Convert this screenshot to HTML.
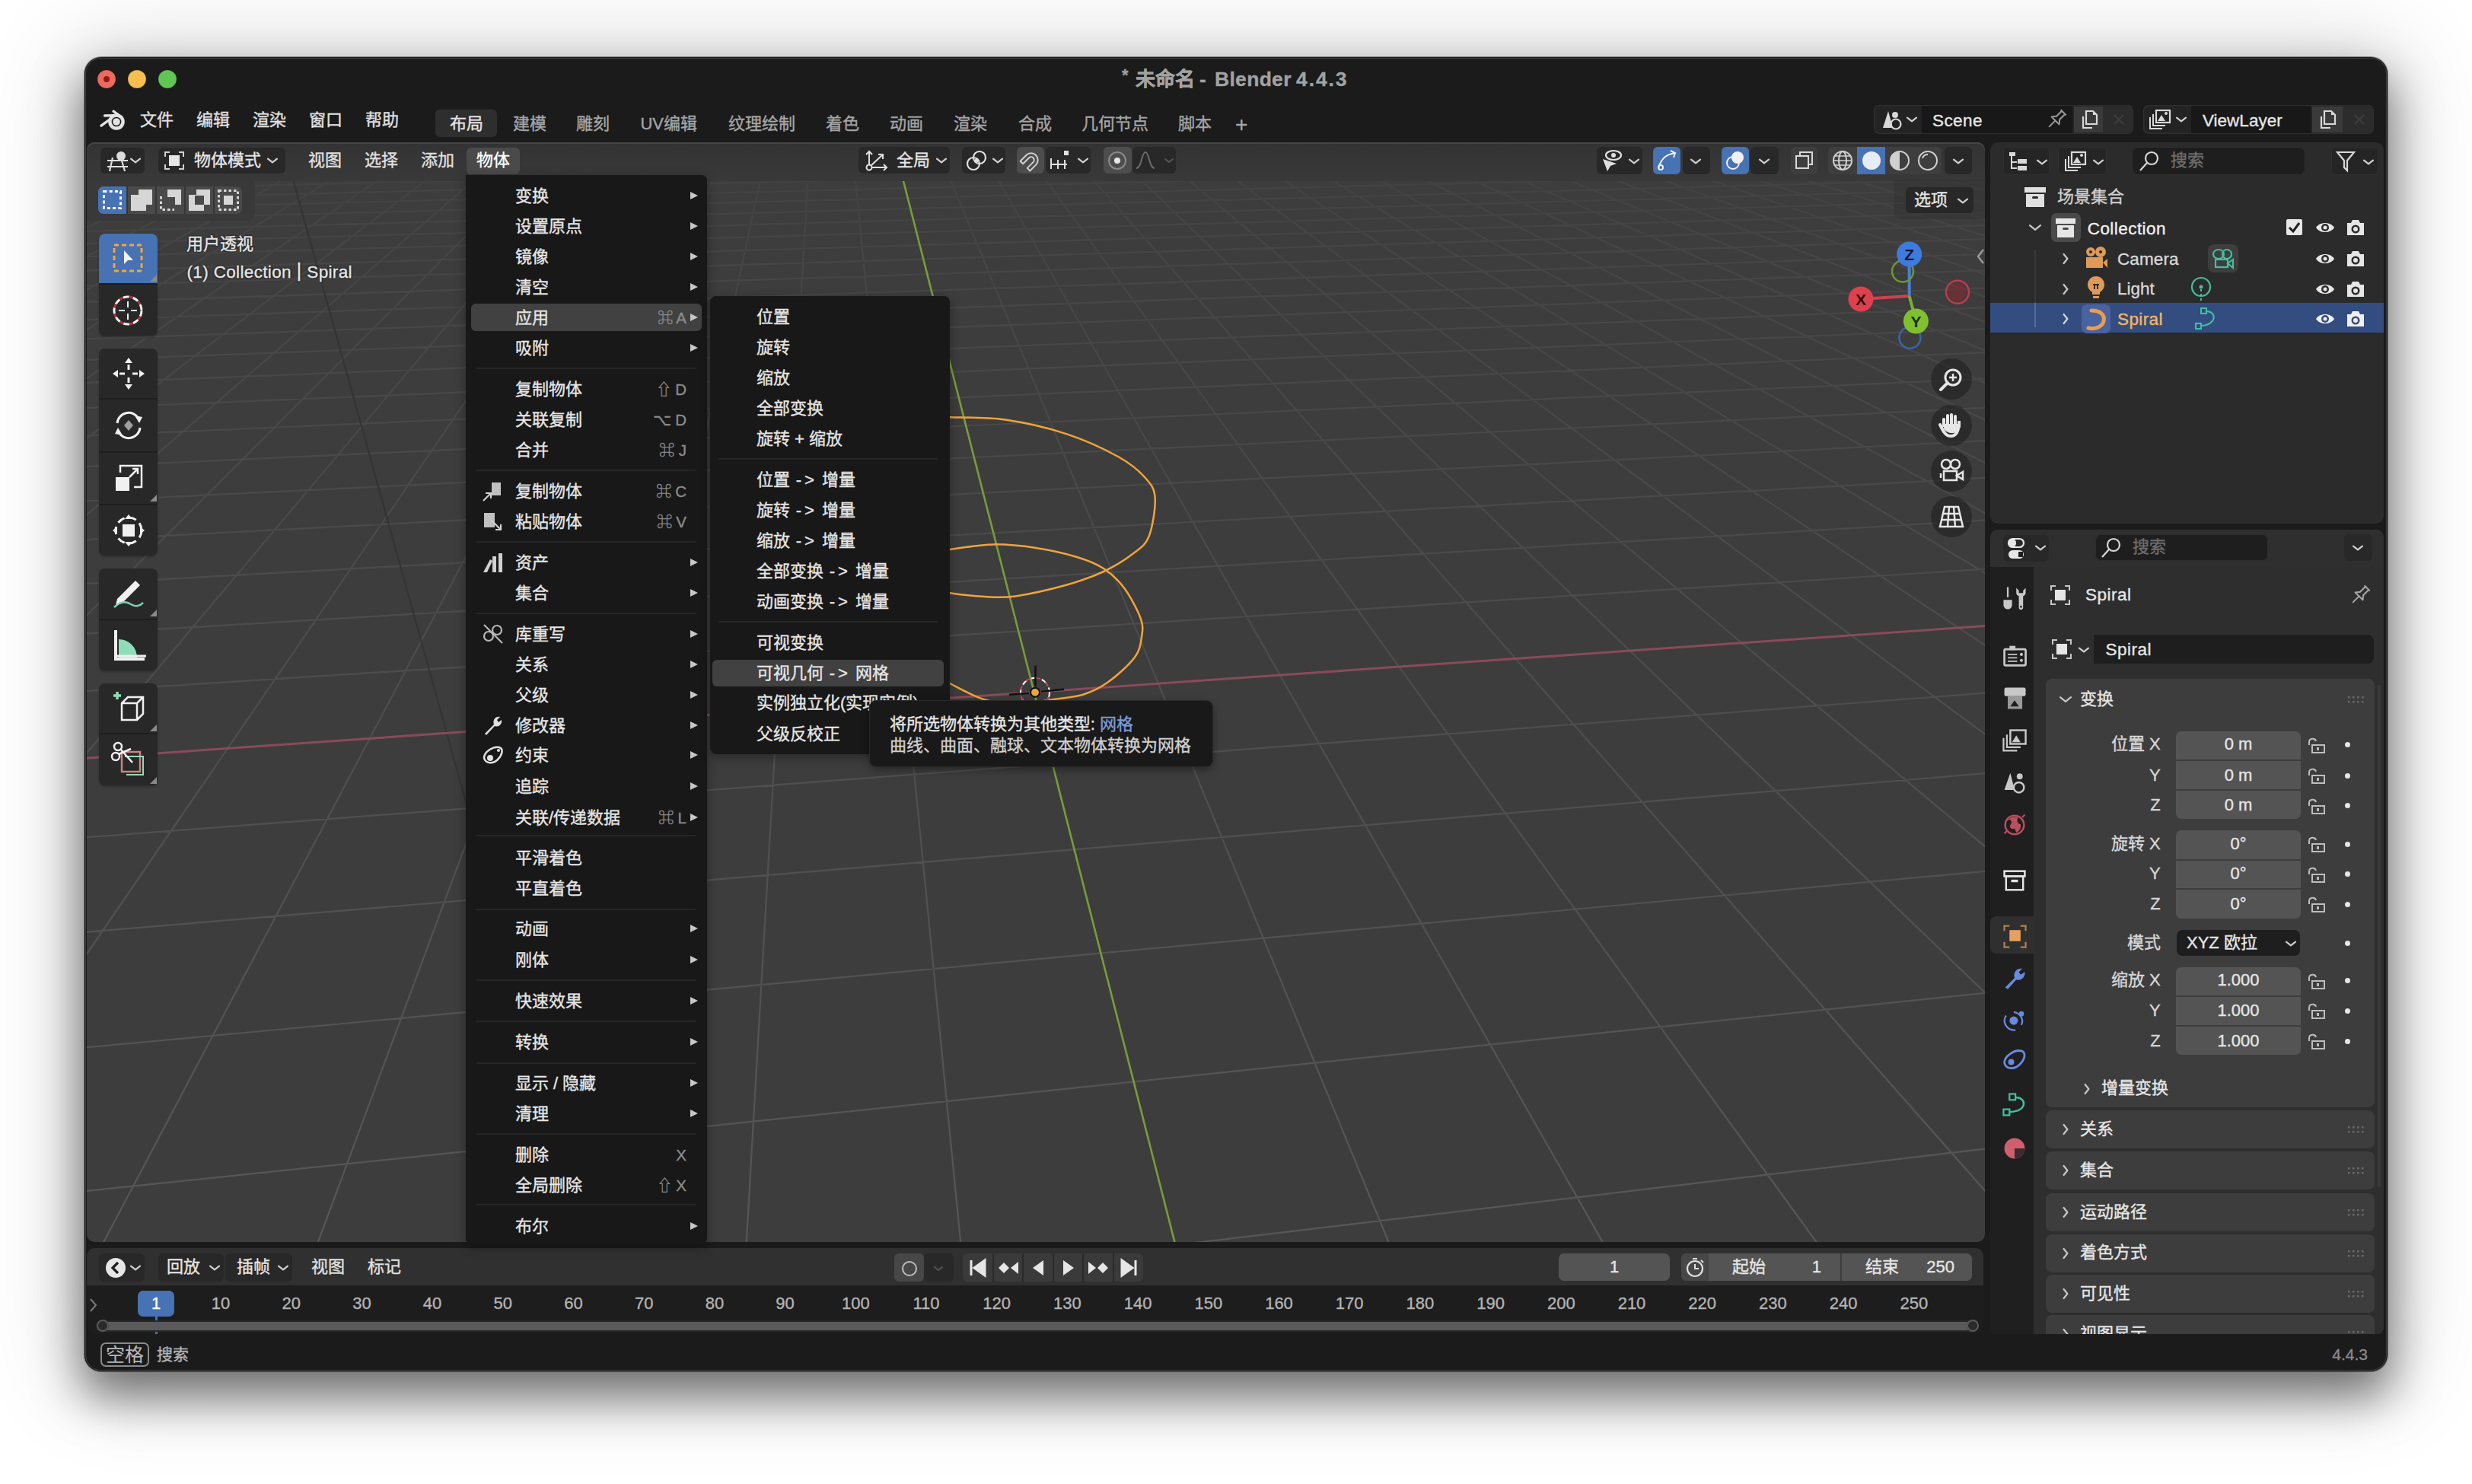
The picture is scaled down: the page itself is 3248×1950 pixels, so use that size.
<!DOCTYPE html><html lang="zh-CN"><head><meta charset="utf-8"><title>Blender</title><style>
html,body{margin:0;padding:0;}
body{width:3248px;height:1950px;overflow:hidden;background:#ffffff;position:relative;font-family:"Liberation Sans", sans-serif;}
.t{position:absolute;white-space:nowrap;-webkit-text-stroke:0.35px currentColor;}
.b{position:absolute;}
.s{position:absolute;overflow:visible;}
</style></head><body>
<div class="b" style="left:111px;top:75px;width:3025.5px;height:1727px;border-radius:22px;background:#1b1b1b;box-shadow:0 0 0 1px rgba(0,0,0,0.35), 0 30px 60px 4px rgba(0,0,0,0.50), 0 6px 120px 16px rgba(0,0,0,0.17);"></div>
<div class="b" style="left:112px;top:76px;width:3023.5px;height:1725px;border-radius:21px;box-shadow:inset 0 0 0 1px rgba(255,255,255,0.16);z-index:50;pointer-events:none"></div>
<div class="b" style="left:128px;top:92px;width:24px;height:24px;border-radius:12px;background:#ec6a5e;box-shadow:inset 0 0 0 0.5px rgba(0,0,0,0.25)"></div>
<div class="b" style="left:136.3px;top:100.3px;width:7.4px;height:7.4px;border-radius:4px;background:#8f1a12"></div>
<div class="b" style="left:168px;top:92px;width:24px;height:24px;border-radius:12px;background:#f4bf4f;box-shadow:inset 0 0 0 0.5px rgba(0,0,0,0.25)"></div>
<div class="b" style="left:208px;top:92px;width:24px;height:24px;border-radius:12px;background:#61c554;box-shadow:inset 0 0 0 0.5px rgba(0,0,0,0.25)"></div>
<div class="t" style="left:1474.0px;top:83.6px;font-size:22px;line-height:30.8px;color:#a2a2a2;font-weight:bold;">*</div>
<div class="t" style="left:1491.5px;top:85.8px;font-size:26px;line-height:36.4px;color:#a2a2a2;font-weight:bold;">未命名</div>
<div class="t" style="left:1576.0px;top:86.3px;font-size:26px;line-height:36.4px;color:#a2a2a2;font-weight:bold;">-</div>
<div class="t" style="left:1596.0px;top:86.0px;font-size:26.5px;line-height:37.1px;color:#a2a2a2;font-weight:bold;letter-spacing:0.3px">Blender</div>
<div class="t" style="left:1703.0px;top:86.0px;font-size:26.5px;line-height:37.1px;color:#a2a2a2;font-weight:bold;letter-spacing:1.9px">4.4.3</div>
<svg class="s" style="left:126.0px;top:138.0px;" width="40" height="36" viewBox="0 0 40 36"><g stroke="#e2e2e2" stroke-linecap="round" stroke-width="3.3" fill="none"><path d="M23 8.2 L31 14"/><path d="M11.5 14 L25 13.6"/><path d="M7 27.2 L19.5 18"/></g><circle cx="27" cy="22" r="10.8" fill="#e2e2e2"/><circle cx="27" cy="22" r="5.6" fill="none" stroke="#151515" stroke-width="1.5"/></svg>
<div class="t" style="left:183.7px;top:142.6px;font-size:22px;line-height:30.8px;color:#e0e0e0;font-weight:normal;">文件</div>
<div class="t" style="left:258.0px;top:142.6px;font-size:22px;line-height:30.8px;color:#e0e0e0;font-weight:normal;">编辑</div>
<div class="t" style="left:332.0px;top:142.6px;font-size:22px;line-height:30.8px;color:#e0e0e0;font-weight:normal;">渲染</div>
<div class="t" style="left:406.0px;top:142.6px;font-size:22px;line-height:30.8px;color:#e0e0e0;font-weight:normal;">窗口</div>
<div class="t" style="left:480.0px;top:142.6px;font-size:22px;line-height:30.8px;color:#e0e0e0;font-weight:normal;">帮助</div>
<div class="b" style="left:571.5px;top:144.0px;width:81.5px;height:36.0px;background:#2e2e2e;border-radius:6px;box-shadow:inset 0 1px 0 rgba(255,255,255,0.04)"></div>
<div class="t" style="left:590.6px;top:148.1px;font-size:22px;line-height:30.8px;color:#e6e6e6;font-weight:normal;">布局</div>
<div class="t" style="left:673.5px;top:148.1px;font-size:22px;line-height:30.8px;color:#a6a6a6;font-weight:normal;">建模</div>
<div class="t" style="left:756.5px;top:148.1px;font-size:22px;line-height:30.8px;color:#a6a6a6;font-weight:normal;">雕刻</div>
<div class="t" style="left:841.4px;top:148.1px;font-size:22px;line-height:30.8px;color:#a6a6a6;font-weight:normal;">UV编辑</div>
<div class="t" style="left:956.7px;top:148.1px;font-size:22px;line-height:30.8px;color:#a6a6a6;font-weight:normal;">纹理绘制</div>
<div class="t" style="left:1085.0px;top:148.1px;font-size:22px;line-height:30.8px;color:#a6a6a6;font-weight:normal;">着色</div>
<div class="t" style="left:1169.0px;top:148.1px;font-size:22px;line-height:30.8px;color:#a6a6a6;font-weight:normal;">动画</div>
<div class="t" style="left:1253.0px;top:148.1px;font-size:22px;line-height:30.8px;color:#a6a6a6;font-weight:normal;">渲染</div>
<div class="t" style="left:1338.0px;top:148.1px;font-size:22px;line-height:30.8px;color:#a6a6a6;font-weight:normal;">合成</div>
<div class="t" style="left:1420.7px;top:148.1px;font-size:22px;line-height:30.8px;color:#a6a6a6;font-weight:normal;">几何节点</div>
<div class="t" style="left:1548.0px;top:148.1px;font-size:22px;line-height:30.8px;color:#a6a6a6;font-weight:normal;">脚本</div>
<div class="t" style="left:1623.0px;top:143.9px;font-size:28px;line-height:39.2px;color:#a6a6a6;font-weight:normal;">+</div>
<div class="b" style="left:2462.0px;top:138.0px;width:341.0px;height:38.0px;background:#232323;border-radius:7px;box-shadow:inset 0 0 0 1.5px #2f2f2f"></div>
<div class="b" style="left:2525.0px;top:139.0px;width:198.0px;height:36.0px;background:#181818;border-radius:0px;"></div>
<div class="b" style="left:2725.0px;top:140.0px;width:38.0px;height:34.0px;background:#3a3a3a;border-radius:0px;"></div>
<div class="b" style="left:2763.0px;top:140.0px;width:38.5px;height:34.0px;background:#2c2c2c;border-radius:0px;border-radius:0 6px 6px 0"></div>
<div class="t" style="left:2539.0px;top:143.2px;font-size:22.5px;line-height:31.5px;color:#e6e6e6;font-weight:normal;letter-spacing:0.4px">Scene</div>
<svg class="s" style="left:2504.0px;top:151.0px;" width="16" height="12" viewBox="0 0 16 12"><path d="M2 3.6 L8 8.4 L14 3.6" fill="none" stroke="#d0d0d0" stroke-width="2.2" stroke-linecap="round" stroke-linejoin="round"/></svg>
<svg class="s" style="left:2470.0px;top:142.0px;" width="34" height="30" viewBox="0 0 34 30"><path d="M4 26 L11 4 L17 26 Z" fill="#d8d8d8"/><circle cx="20" cy="9" r="4" fill="#d8d8d8"/><circle cx="21" cy="21" r="6.5" fill="none" stroke="#d8d8d8" stroke-width="2.2"/></svg>
<svg class="s" style="left:2686.0px;top:141.0px;" width="32" height="32" viewBox="0 0 32 32"><g transform="rotate(45 16 16)"><path d="M11 3 H21 M13 3 V13 L9 18 H23 L19 13 V3 M16 18 V30" fill="none" stroke="#9a9a9a" stroke-width="2" stroke-linejoin="round"/></g></svg>
<svg class="s" style="left:2731.0px;top:143.0px;" width="28" height="28" viewBox="0 0 28 28"><path d="M6 10 V25 H18" fill="none" stroke="#d8d8d8" stroke-width="2.2"/><path d="M10 3 H19 L24 8 V20 H10 Z" fill="#3a3a3a" stroke="#d8d8d8" stroke-width="2.2"/><path d="M19 3 V8 H24 Z" fill="#d8d8d8"/></svg>
<svg class="s" style="left:2771.0px;top:144.0px;" width="26" height="26" viewBox="0 0 26 26"><path d="M7 7 L19 19 M19 7 L7 19" stroke="#3e3e3e" stroke-width="2.2"/></svg>
<div class="b" style="left:2816.0px;top:138.0px;width:303.0px;height:38.0px;background:#232323;border-radius:7px;box-shadow:inset 0 0 0 1.5px #2f2f2f"></div>
<div class="b" style="left:2879.0px;top:139.0px;width:157.0px;height:36.0px;background:#181818;border-radius:0px;"></div>
<div class="b" style="left:3038.0px;top:140.0px;width:40.0px;height:34.0px;background:#3a3a3a;border-radius:0px;"></div>
<div class="b" style="left:3078.0px;top:140.0px;width:39.5px;height:34.0px;background:#2c2c2c;border-radius:0px;border-radius:0 6px 6px 0"></div>
<div class="t" style="left:2894.0px;top:143.2px;font-size:22.5px;line-height:31.5px;color:#e6e6e6;font-weight:normal;">ViewLayer</div>
<svg class="s" style="left:2858.0px;top:151.0px;" width="16" height="12" viewBox="0 0 16 12"><path d="M2 3.6 L8 8.4 L14 3.6" fill="none" stroke="#d0d0d0" stroke-width="2.2" stroke-linecap="round" stroke-linejoin="round"/></svg>
<svg class="s" style="left:2823.0px;top:142.0px;" width="32" height="30" viewBox="0 0 32 30"><rect x="10" y="3" width="18" height="16" fill="none" stroke="#d8d8d8" stroke-width="2.2"/><path d="M12 17 L17 9 L22 17 Z" fill="#d8d8d8"/><circle cx="23" cy="7" r="2" fill="#d8d8d8"/><path d="M6 8 V23 H22 M2 12 V27 H18" fill="none" stroke="#d8d8d8" stroke-width="2"/></svg>
<svg class="s" style="left:3044.0px;top:143.0px;" width="28" height="28" viewBox="0 0 28 28"><path d="M6 10 V25 H18" fill="none" stroke="#d8d8d8" stroke-width="2.2"/><path d="M10 3 H19 L24 8 V20 H10 Z" fill="#3a3a3a" stroke="#d8d8d8" stroke-width="2.2"/><path d="M19 3 V8 H24 Z" fill="#d8d8d8"/></svg>
<svg class="s" style="left:3087.0px;top:144.0px;" width="26" height="26" viewBox="0 0 26 26"><path d="M7 7 L19 19 M19 7 L7 19" stroke="#3e3e3e" stroke-width="2.2"/></svg>
<svg class="s" style="left:114.0px;top:187.0px;" width="2494" height="1445" viewBox="0 0 2494 1445"><defs><clipPath id="vpc"><rect x="0" y="0" width="2494" height="1445" rx="10"/></clipPath></defs><g clip-path="url(#vpc)"><rect x="0" y="0" width="2494" height="1445" fill="#3d3d3d"/><linearGradient id="gg" gradientUnits="userSpaceOnUse" x1="0" y1="0" x2="0" y2="1445"><stop offset="0" stop-color="#414141"/><stop offset="0.1" stop-color="#454545"/><stop offset="0.45" stop-color="#4c4c4c"/><stop offset="1" stop-color="#575757"/></linearGradient><path d="M1653.1 -211.4L28167.0 5161.5M1632.4 -211.3L28859.2 5485.4M1611.7 -211.1L29638.1 5849.9M1590.9 -210.9L30521.0 6263.0M1570.1 -210.8L31530.4 6735.3M1549.2 -210.6L32695.4 7280.4M1528.3 -210.4L34055.1 7916.6M1507.3 -210.2L35662.7 8668.8M1486.2 -210.1L37592.7 9571.9M1465.1 -209.9L39953.2 10676.4M1443.9 -209.7L38942.4 10885.3M1422.7 -209.5L37187.0 10883.6M1401.4 -209.3L35431.6 10881.9M1380.0 -209.2L33676.2 10880.2M1358.6 -209.0L31920.7 10878.5M1337.1 -208.8L30165.3 10876.8M1315.5 -208.6L28409.9 10875.1M1293.9 -208.5L26654.5 10873.4M1272.2 -208.3L24899.1 10871.7M1250.5 -208.1L23143.6 10870.0M1228.7 -207.9L21388.2 10868.2M1206.9 -207.7L19632.8 10866.5M1184.9 -207.5L17877.4 10864.8M1163.0 -207.4L16122.0 10863.1M1140.9 -207.2L14366.5 10861.4M1118.8 -207.0L12611.1 10859.7M1096.6 -206.8L10855.7 10858.0M1074.4 -206.6L9100.3 10856.3M1052.1 -206.4L7344.9 10854.6M1029.7 -206.2L5589.4 10852.9M984.8 -205.9L2078.6 10849.5M962.2 -205.7L323.2 10847.7M939.6 -205.5L-1432.2 10846.0M916.9 -205.3L-3187.7 10844.3M894.1 -205.1L-4943.1 10842.6M871.3 -204.9L-6698.5 10840.9M848.4 -204.7L-8453.9 10839.2M825.4 -204.5L-10209.3 10837.5M802.4 -204.3L-11964.8 10835.8M779.3 -204.2L-13720.2 10834.1M756.1 -204.0L-15475.6 10832.4M732.8 -203.8L-17231.0 10830.7M709.5 -203.6L-18986.4 10829.0M686.2 -203.4L-20741.9 10827.3M662.7 -203.2L-22497.3 10825.5M639.2 -203.0L-24252.7 10823.8M615.6 -202.8L-26008.1 10822.1M591.9 -202.6L-27763.5 10820.4M568.2 -202.4L-29519.0 10818.7M544.4 -202.2L-31274.4 10817.0M520.5 -202.0L-33029.8 10815.3M496.6 -201.8L-34785.2 10813.6M472.6 -201.6L-36540.7 10811.9M448.5 -201.4L-38296.1 10810.2M424.3 -201.2L-40051.5 10808.5M400.1 -201.0L-41806.9 10806.8M375.8 -200.8L-43562.3 10805.0M351.4 -200.6L-45317.8 10803.3M326.9 -200.4L-47073.2 10801.6M302.4 -200.2L-48828.6 10799.9M2246.9 -216.4L-470.1 -193.7M2259.8 -215.1L-487.3 -191.9M2272.9 -213.7L-505.1 -189.9M2286.2 -212.3L-523.2 -188.0M2299.9 -210.9L-541.8 -186.0M2313.8 -209.4L-560.9 -183.9M2328.0 -207.9L-580.4 -181.8M2342.5 -206.4L-600.5 -179.6M2357.4 -204.9L-621.1 -177.4M2372.5 -203.3L-642.2 -175.1M2388.0 -201.7L-663.9 -172.7M2403.9 -200.0L-686.2 -170.3M2420.1 -198.3L-709.2 -167.8M2436.7 -196.6L-732.7 -165.3M2453.6 -194.8L-756.9 -162.7M2471.0 -193.0L-781.9 -160.0M2488.7 -191.1L-807.5 -157.2M2506.9 -189.2L-833.9 -154.3M2525.6 -187.3L-861.2 -151.4M2544.7 -185.3L-889.2 -148.3M2564.2 -183.3L-918.1 -145.2M2584.3 -181.2L-948.0 -142.0M2604.9 -179.0L-978.8 -138.6M2625.9 -176.8L-1010.6 -135.2M2647.6 -174.5L-1043.4 -131.6M2669.8 -172.2L-1077.4 -127.9M2692.6 -169.8L-1112.5 -124.1M2716.1 -167.4L-1148.9 -120.2M2740.2 -164.9L-1186.5 -116.1M2764.9 -162.3L-1225.5 -111.9M2790.4 -159.6L-1266.0 -107.5M2816.6 -156.9L-1307.9 -103.0M2843.6 -154.1L-1351.5 -98.3M2871.3 -151.2L-1396.7 -93.3M2899.9 -148.2L-1443.8 -88.3M2929.4 -145.1L-1492.8 -82.9M2959.8 -141.9L-1543.8 -77.4M2991.2 -138.7L-1596.9 -71.7M3023.5 -135.3L-1652.4 -65.7M3056.9 -131.8L-1710.3 -59.4M3091.4 -128.2L-1770.8 -52.8M3127.1 -124.5L-1834.1 -46.0M3164.0 -120.6L-1900.4 -38.8M3202.2 -116.6L-1969.9 -31.3M3241.7 -112.5L-2042.9 -23.4M3282.6 -108.2L-2119.6 -15.1M3325.1 -103.8L-2200.2 -6.3M3369.1 -99.2L-2285.3 2.9M3414.9 -94.4L-2374.9 12.6M3462.4 -89.4L-2469.7 22.9M3511.7 -84.3L-2570.0 33.7M3563.1 -78.9L-2676.3 45.3M3616.6 -73.3L-2789.2 57.5M3672.4 -67.5L-2909.4 70.5M3730.5 -61.4L-3037.4 84.4M3791.2 -55.1L-3174.2 99.2M3854.7 -48.4L-3320.7 115.0M3921.0 -41.5L-3477.8 132.1M3990.5 -34.2L-3647.0 150.4M4063.4 -26.6L-3829.5 170.2M4139.8 -18.6L-4027.0 191.6M4220.1 -10.3L-4241.5 214.8M4304.6 -1.4L-4475.2 240.1M4393.6 7.9L-4730.9 267.8M4487.5 17.7L-5011.8 298.2M4586.7 28.0L-5321.7 331.8M4691.6 39.0L-5665.6 369.0M4802.9 50.6L-6049.1 410.6M4920.9 63.0L-6479.8 457.2M5046.5 76.1L-6966.7 510.0M5180.3 90.1L-7521.8 570.1M5323.2 105.0L-8160.3 639.3M5476.1 121.0L-8902.6 719.7M5640.2 138.1L-9776.4 814.3M5816.7 156.6L-10819.7 927.3M6007.1 176.4L-12087.5 1064.6M6213.0 198.0L-13660.7 1235.1M6436.4 221.3L-15665.0 1452.2M6679.8 246.7L-18305.5 1738.2M6945.8 274.5L-21942.3 2132.1M7560.0 338.7L-35828.4 3636.2M7916.9 376.0L-51827.1 5369.2M8314.8 417.6L-92436.9 9767.9M8761.0 464.2L-89953.2 10759.9M9264.9 516.8L-76917.6 10772.6M9838.5 576.7L-63882.1 10785.3M10497.4 645.6L-50846.5 10798.0M11262.0 725.5L-37810.9 10810.6M12160.0 819.3L-24775.3 10823.3M13229.8 931.1L-11739.7 10836.0M14525.7 1066.5L1295.9 10848.7M16128.0 1233.9L14331.5 10861.4M18159.9 1446.2L27367.1 10874.1M20820.9 1724.2L40402.7 10886.7" stroke="url(#gg)" stroke-width="2.2" fill="none"/><path d="M500.6 875.8L120.2 -494.2" stroke="#343434" stroke-width="2.2" fill="none"/><path d="M8306.1 230.6L-100503.0 7811.4" stroke="#8a4a5a" stroke-width="3" fill="none"/><path d="M1007.3 -206.1L3834.0 10851.2" stroke="#7a9c3a" stroke-width="2.6" fill="none"/><path d="M1086.0 361.0C1094.0 361.1 1113.8 360.7 1134.0 361.3C1154.2 361.9 1181.3 360.9 1206.9 364.6C1232.5 368.3 1263.0 375.3 1287.7 383.4C1312.4 391.5 1338.0 403.6 1355.0 413.0C1372.0 422.4 1381.9 431.0 1390.0 440.0C1398.1 449.0 1402.7 454.0 1403.6 467.0C1404.5 480.0 1400.4 505.7 1395.5 518.0C1390.6 530.3 1383.9 533.3 1374.0 541.0C1364.1 548.7 1350.4 557.2 1336.0 564.0C1321.6 570.8 1307.0 576.1 1287.7 581.5C1268.4 586.9 1238.0 593.8 1220.0 596.4C1202.0 599.0 1194.3 597.7 1180.0 597.0C1165.7 596.3 1149.7 594.6 1134.0 592.3C1118.3 590.0 1094.0 584.5 1086.0 583.0" stroke="#f0a43c" stroke-width="2.5" fill="none"/><path d="M1086.0 541.0C1094.0 540.0 1116.5 537.1 1134.0 535.0C1151.5 532.9 1171.9 528.7 1190.7 528.4C1209.5 528.1 1228.6 530.2 1247.0 533.0C1265.4 535.8 1286.2 540.5 1301.0 545.0C1315.8 549.5 1325.7 553.2 1336.0 560.0C1346.3 566.8 1354.9 574.6 1363.0 585.6C1371.1 596.6 1381.0 615.3 1384.8 626.0C1388.6 636.7 1387.3 641.5 1386.0 650.0C1384.7 658.5 1384.1 667.1 1376.7 677.0C1369.3 686.9 1352.9 701.5 1341.6 709.6C1330.3 717.7 1321.6 721.9 1309.0 725.7C1296.4 729.5 1280.3 730.3 1266.0 732.5C1251.7 734.7 1237.3 739.0 1223.0 739.0C1208.7 739.0 1194.8 737.2 1180.0 732.5C1165.2 727.8 1149.7 719.2 1134.0 711.0C1118.3 702.8 1094.0 687.7 1086.0 683.0" stroke="#f0a43c" stroke-width="2.5" fill="none"/><circle cx="1246" cy="722.8" r="19" fill="none" stroke="#ffffff" stroke-width="2" stroke-dasharray="8 6"/><circle cx="1246" cy="722.8" r="19" fill="none" stroke="#d04050" stroke-width="2" stroke-dasharray="6 8" stroke-dashoffset="8"/><path d="M1212 725.8L1238 723.8M1254 721.8L1284 718.8M1246.5 687.8L1246.5 714.8" stroke="#111" stroke-width="2.6"/><circle cx="1246" cy="722.8" r="6" fill="#f0a43c" stroke="#111" stroke-width="2.2"/></g></svg>
<div class="b" style="left:114px;top:187px;width:2494px;height:51px;border-radius:10px 10px 0 0;background:linear-gradient(#333333,#393939);box-shadow:inset 0 2px 0 rgba(255,255,255,0.09)"></div>
<div class="b" style="left:114px;top:238px;width:221px;height:52px;border-radius:0 0 10px 0;background:#393939"></div>
<div class="b" style="left:131.5px;top:193.5px;width:58.5px;height:34.5px;background:#282828;border-radius:6px;"></div>
<svg class="s" style="left:138.0px;top:196.0px;" width="36" height="30" viewBox="0 0 36 30"><circle cx="21" cy="9" r="6" fill="#dcdcdc"/><path d="M3 15 H30 M3 23 H30 M10 11 L6 29 M22 15 L26 29" stroke="#dcdcdc" stroke-width="2.2"/></svg>
<svg class="s" style="left:170.0px;top:205.0px;" width="16" height="12" viewBox="0 0 16 12"><path d="M2 3.6 L8 8.4 L14 3.6" fill="none" stroke="#d0d0d0" stroke-width="2.2" stroke-linecap="round" stroke-linejoin="round"/></svg>
<div class="b" style="left:208.0px;top:193.5px;width:167.0px;height:34.5px;background:#282828;border-radius:6px;"></div>
<svg class="s" style="left:214.0px;top:197.0px;" width="30" height="28" viewBox="0 0 30 28"><rect x="8" y="7" width="14" height="14" fill="#e6e6e6"/><path d="M3 9 V3 H9 M21 3 H27 V9 M27 19 V25 H21 M9 25 H3 V19" fill="none" stroke="#d0d0d0" stroke-width="2"/></svg>
<div class="t" style="left:255.0px;top:195.6px;font-size:22px;line-height:30.8px;color:#e6e6e6;font-weight:normal;">物体模式</div>
<svg class="s" style="left:350.0px;top:205.0px;" width="16" height="12" viewBox="0 0 16 12"><path d="M2 3.6 L8 8.4 L14 3.6" fill="none" stroke="#d0d0d0" stroke-width="2.2" stroke-linecap="round" stroke-linejoin="round"/></svg>
<div class="t" style="left:404.6px;top:195.6px;font-size:22px;line-height:30.8px;color:#e0e0e0;font-weight:normal;">视图</div>
<div class="t" style="left:478.6px;top:195.6px;font-size:22px;line-height:30.8px;color:#e0e0e0;font-weight:normal;">选择</div>
<div class="t" style="left:552.7px;top:195.6px;font-size:22px;line-height:30.8px;color:#e0e0e0;font-weight:normal;">添加</div>
<div class="b" style="left:613.0px;top:193.5px;width:70.0px;height:35.5px;background:#4a4a4a;border-radius:6px;"></div>
<div class="t" style="left:625.5px;top:195.6px;font-size:22px;line-height:30.8px;color:#ffffff;font-weight:normal;">物体</div>
<div class="b" style="left:1128.0px;top:193.0px;width:120.0px;height:34.5px;background:#282828;border-radius:6px;"></div>
<svg class="s" style="left:1136.0px;top:196.0px;" width="34" height="30" viewBox="0 0 34 30"><circle cx="6" cy="24" r="3.5" fill="none" stroke="#e0e0e0" stroke-width="2"/><path d="M6 20 V3 M2 7 L6 3 L10 7 M9 24 H29 M25 20 L29 24 L25 28 M9 21 L24 7 M18 7 H24 V13" fill="none" stroke="#e0e0e0" stroke-width="2"/></svg>
<div class="t" style="left:1178.0px;top:195.6px;font-size:22px;line-height:30.8px;color:#e6e6e6;font-weight:normal;">全局</div>
<svg class="s" style="left:1229.0px;top:205.0px;" width="16" height="12" viewBox="0 0 16 12"><path d="M2 3.6 L8 8.4 L14 3.6" fill="none" stroke="#d0d0d0" stroke-width="2.2" stroke-linecap="round" stroke-linejoin="round"/></svg>
<div class="b" style="left:1264.0px;top:193.0px;width:56.5px;height:34.5px;background:#282828;border-radius:6px;"></div>
<svg class="s" style="left:1268.0px;top:196.0px;" width="30" height="30" viewBox="0 0 30 30"><circle cx="11" cy="19" r="8" fill="none" stroke="#e0e0e0" stroke-width="2.2"/><circle cx="19" cy="11" r="8" fill="none" stroke="#e0e0e0" stroke-width="2.2"/><circle cx="15" cy="15" r="2.5" fill="#e0e0e0"/></svg>
<svg class="s" style="left:1303.0px;top:205.0px;" width="16" height="12" viewBox="0 0 16 12"><path d="M2 3.6 L8 8.4 L14 3.6" fill="none" stroke="#d0d0d0" stroke-width="2.2" stroke-linecap="round" stroke-linejoin="round"/></svg>
<div class="b" style="left:1335.6px;top:193.0px;width:36.4px;height:34.5px;background:#4d4d4d;border-radius:6px;"></div>
<svg class="s" style="left:1338.0px;top:196.0px;" width="32" height="30" viewBox="0 0 32 30"><g transform="rotate(45 16 15)"><path d="M7 25 V14 A9 9 0 0 1 25 14 V25 H20 V14 A4 4 0 0 0 12 14 V25 Z" fill="none" stroke="#cfcfcf" stroke-width="2" stroke-linejoin="round"/></g></svg>
<div class="b" style="left:1374.0px;top:193.0px;width:59.0px;height:34.5px;background:#282828;border-radius:6px;"></div>
<svg class="s" style="left:1378.0px;top:196.0px;" width="36" height="30" viewBox="0 0 36 30"><path d="M3 12 V26 M12 14 V26 M21 14 V26 M3 20 H24" stroke="#e0e0e0" stroke-width="2"/><rect x="20" y="2" width="6" height="6" fill="#e0e0e0"/></svg>
<svg class="s" style="left:1415.0px;top:205.0px;" width="16" height="12" viewBox="0 0 16 12"><path d="M2 3.6 L8 8.4 L14 3.6" fill="none" stroke="#d0d0d0" stroke-width="2.2" stroke-linecap="round" stroke-linejoin="round"/></svg>
<div class="b" style="left:1450.0px;top:193.0px;width:37.0px;height:34.5px;background:#4d4d4d;border-radius:6px;"></div>
<svg class="s" style="left:1452.0px;top:196.0px;" width="32" height="30" viewBox="0 0 32 30"><circle cx="16" cy="15" r="11" fill="none" stroke="#8a8a8a" stroke-width="2"/><circle cx="16" cy="15" r="4" fill="#e6e6e6"/></svg>
<div class="b" style="left:1488.0px;top:193.0px;width:57.0px;height:34.5px;background:#282828;border-radius:6px;"></div>
<svg class="s" style="left:1490.0px;top:197.0px;" width="40" height="28" viewBox="0 0 40 28"><path d="M3 24 C10 24 10 3 15 3 C20 3 20 24 27 24" fill="none" stroke="#6a6a6a" stroke-width="2"/></svg>
<svg class="s" style="left:1529.0px;top:206.0px;" width="14" height="10" viewBox="0 0 14 10"><path d="M2 3.0 L7 7.0 L12 3.0" fill="none" stroke="#555" stroke-width="2.2" stroke-linecap="round" stroke-linejoin="round"/></svg>
<div class="b" style="left:2098.0px;top:193.0px;width:60.0px;height:36.0px;background:#282828;border-radius:6px;"></div>
<svg class="s" style="left:2102.0px;top:195.0px;" width="36" height="32" viewBox="0 0 36 32"><path d="M4 14 L22 20 L14 23 L10 30 Z" fill="#e0e0e0"/><ellipse cx="18" cy="9" rx="10" ry="6" fill="none" stroke="#e0e0e0" stroke-width="2.2"/><circle cx="18" cy="9" r="3" fill="#e0e0e0"/></svg>
<svg class="s" style="left:2139.0px;top:206.0px;" width="16" height="12" viewBox="0 0 16 12"><path d="M2 3.6 L8 8.4 L14 3.6" fill="none" stroke="#d0d0d0" stroke-width="2.2" stroke-linecap="round" stroke-linejoin="round"/></svg>
<div class="b" style="left:2172.0px;top:193.0px;width:36.0px;height:36.0px;background:#4772b3;border-radius:6px;"></div>
<svg class="s" style="left:2174.0px;top:195.0px;" width="32" height="32" viewBox="0 0 32 32"><path d="M5 26 C9 12 16 8 27 6 M21 3 L27 6 L25 12" fill="none" stroke="#f0f0f0" stroke-width="2"/><circle cx="8" cy="25" r="3" fill="none" stroke="#f0f0f0" stroke-width="2"/></svg>
<div class="b" style="left:2211.0px;top:193.0px;width:36.0px;height:36.0px;background:#282828;border-radius:6px;"></div>
<svg class="s" style="left:2220.0px;top:206.0px;" width="16" height="12" viewBox="0 0 16 12"><path d="M2 3.6 L8 8.4 L14 3.6" fill="none" stroke="#d0d0d0" stroke-width="2.2" stroke-linecap="round" stroke-linejoin="round"/></svg>
<div class="b" style="left:2262.0px;top:193.0px;width:36.0px;height:36.0px;background:#4772b3;border-radius:6px;"></div>
<svg class="s" style="left:2264.0px;top:195.0px;" width="32" height="32" viewBox="0 0 32 32"><circle cx="13" cy="19" r="8" fill="none" stroke="#f0f0f0" stroke-width="2"/><circle cx="19" cy="12" r="8" fill="#f0f0f0"/></svg>
<div class="b" style="left:2300.0px;top:193.0px;width:37.0px;height:36.0px;background:#282828;border-radius:6px;"></div>
<svg class="s" style="left:2310.0px;top:206.0px;" width="16" height="12" viewBox="0 0 16 12"><path d="M2 3.6 L8 8.4 L14 3.6" fill="none" stroke="#d0d0d0" stroke-width="2.2" stroke-linecap="round" stroke-linejoin="round"/></svg>
<div class="b" style="left:2353.0px;top:193.0px;width:35.0px;height:36.0px;background:#3e3e3e;border-radius:6px;"></div>
<svg class="s" style="left:2355.0px;top:195.0px;" width="32" height="32" viewBox="0 0 32 32"><rect x="5" y="10" width="16" height="16" fill="none" stroke="#d8d8d8" stroke-width="2"/><path d="M10 10 V5 H26 V21 H21" fill="none" stroke="#d8d8d8" stroke-width="2"/></svg>
<div class="b" style="left:2402.0px;top:193.0px;width:149.0px;height:36.0px;background:#3e3e3e;border-radius:6px;"></div>
<div class="b" style="left:2440.0px;top:193.0px;width:37.0px;height:36.0px;background:#4772b3;border-radius:0px;"></div>
<svg class="s" style="left:2404.0px;top:195.0px;" width="34" height="32" viewBox="0 0 34 32"><circle cx="17" cy="16" r="12" fill="none" stroke="#d0d0d0" stroke-width="2"/><ellipse cx="17" cy="16" rx="5" ry="12" fill="none" stroke="#d0d0d0" stroke-width="2"/><path d="M5 16 H29 M7 10 H27 M7 22 H27" stroke="#d0d0d0" stroke-width="1.6"/></svg>
<svg class="s" style="left:2442.0px;top:195.0px;" width="34" height="32" viewBox="0 0 34 32"><circle cx="17" cy="16" r="12" fill="#e8ecf4"/></svg>
<svg class="s" style="left:2479.0px;top:195.0px;" width="34" height="32" viewBox="0 0 34 32"><circle cx="17" cy="16" r="12" fill="none" stroke="#d0d0d0" stroke-width="2"/><path d="M17 4 A12 12 0 0 0 17 28 Z" fill="#d0d0d0"/></svg>
<svg class="s" style="left:2516.0px;top:195.0px;" width="34" height="32" viewBox="0 0 34 32"><circle cx="17" cy="16" r="12" fill="none" stroke="#d0d0d0" stroke-width="2"/><path d="M10 13 A7 7 0 0 1 17 8" fill="none" stroke="#d0d0d0" stroke-width="2"/></svg>
<div class="b" style="left:2555.0px;top:193.0px;width:36.0px;height:36.0px;background:#282828;border-radius:6px;"></div>
<svg class="s" style="left:2565.0px;top:206.0px;" width="16" height="12" viewBox="0 0 16 12"><path d="M2 3.6 L8 8.4 L14 3.6" fill="none" stroke="#d0d0d0" stroke-width="2.2" stroke-linecap="round" stroke-linejoin="round"/></svg>
<div class="b" style="left:2488px;top:236px;width:120px;height:52px;background:rgba(48,48,48,0.45);border-radius:0 0 0 10px"></div>
<div class="b" style="left:2504.0px;top:245.5px;width:89.0px;height:34.5px;background:#282828;border-radius:6px;"></div>
<div class="t" style="left:2515.0px;top:247.6px;font-size:22px;line-height:30.8px;color:#e6e6e6;font-weight:normal;">选项</div>
<svg class="s" style="left:2571.0px;top:258.0px;" width="16" height="12" viewBox="0 0 16 12"><path d="M2 3.6 L8 8.4 L14 3.6" fill="none" stroke="#d0d0d0" stroke-width="2.2" stroke-linecap="round" stroke-linejoin="round"/></svg>
<div class="b" style="left:129.0px;top:244.6px;width:189.0px;height:36.4px;background:#4a4a4a;border-radius:7px;"></div>
<div class="b" style="left:129.0px;top:244.6px;width:38.0px;height:36.4px;background:#4772b3;border-radius:0px;border-radius:7px 0 0 7px"></div>
<div class="b" style="left:166.0px;top:244.6px;width:2.0px;height:36.4px;background:#363636;border-radius:0px;"></div>
<div class="b" style="left:204.0px;top:244.6px;width:2.0px;height:36.4px;background:#363636;border-radius:0px;"></div>
<div class="b" style="left:242.0px;top:244.6px;width:2.0px;height:36.4px;background:#363636;border-radius:0px;"></div>
<div class="b" style="left:280.0px;top:244.6px;width:2.0px;height:36.4px;background:#363636;border-radius:0px;"></div>
<svg class="s" style="left:133.0px;top:248.0px;" width="30" height="30" viewBox="0 0 30 30"><rect x="3.5" y="3.5" width="22" height="22" fill="none" stroke="#ffffff" stroke-width="3" stroke-dasharray="4 3.2"/></svg>
<svg class="s" style="left:171.0px;top:248.0px;" width="30" height="30" viewBox="0 0 30 30"><path d="M1 8 H11 V1 H29 V21 H21 V29 H1 Z" fill="#d6d6d6"/></svg>
<svg class="s" style="left:209.0px;top:248.0px;" width="30" height="30" viewBox="0 0 30 30"><path d="M11 1 H29 V21 H21 V11 H11 Z" fill="#d6d6d6"/><path d="M2.5 10 V27.5 H20" fill="none" stroke="#d6d6d6" stroke-width="3" stroke-dasharray="3.5 3"/></svg>
<svg class="s" style="left:247.0px;top:248.0px;" width="30" height="30" viewBox="0 0 30 30"><path d="M1 8 H11 V1 H29 V21 H21 V29 H1 Z" fill="#d6d6d6"/><rect x="9" y="9" width="12" height="12" fill="#4a4a4a"/></svg>
<svg class="s" style="left:285.0px;top:248.0px;" width="30" height="30" viewBox="0 0 30 30"><rect x="2.5" y="2.5" width="25" height="25" fill="none" stroke="#d6d6d6" stroke-width="3" stroke-dasharray="3.5 3"/><rect x="9" y="9" width="12" height="12" fill="#d6d6d6"/></svg>
<div class="b" style="left:130.0px;top:307.0px;width:77.0px;height:134.0px;background:#282828;border-radius:8px;box-shadow:0 2px 3px rgba(0,0,0,0.25)"></div>
<div class="b" style="left:130.0px;top:458.0px;width:77.0px;height:272.0px;background:#282828;border-radius:8px;box-shadow:0 2px 3px rgba(0,0,0,0.25)"></div>
<div class="b" style="left:130.0px;top:747.0px;width:77.0px;height:134.0px;background:#282828;border-radius:8px;box-shadow:0 2px 3px rgba(0,0,0,0.25)"></div>
<div class="b" style="left:130.0px;top:898.0px;width:77.0px;height:133.5px;background:#282828;border-radius:8px;box-shadow:0 2px 3px rgba(0,0,0,0.25)"></div>
<div class="b" style="left:130.0px;top:307.0px;width:77.0px;height:65.0px;background:#4772b3;border-radius:8px;border-radius:8px 8px 0 0"></div>
<div class="b" style="left:130.0px;top:372.2px;width:77.0px;height:2.0px;background:#1f1f1f;border-radius:0px;"></div>
<div class="b" style="left:130.0px;top:523.2px;width:77.0px;height:2.0px;background:#1f1f1f;border-radius:0px;"></div>
<div class="b" style="left:130.0px;top:592.8px;width:77.0px;height:2.0px;background:#1f1f1f;border-radius:0px;"></div>
<div class="b" style="left:130.0px;top:662.0px;width:77.0px;height:2.0px;background:#1f1f1f;border-radius:0px;"></div>
<div class="b" style="left:130.0px;top:812.5px;width:77.0px;height:2.0px;background:#1f1f1f;border-radius:0px;"></div>
<div class="b" style="left:130.0px;top:963.0px;width:77.0px;height:2.0px;background:#1f1f1f;border-radius:0px;"></div>
<svg class="s" style="left:144.0px;top:316.0px;" width="50" height="48" viewBox="0 0 50 48"><rect x="6" y="6" width="36" height="34" fill="none" stroke="#f0a640" stroke-width="3" stroke-dasharray="6 4"/><path d="M19 13 L19 31 L24 26 L31 26 Z" fill="#f0f0f0"/></svg>
<svg class="s" style="left:144.0px;top:384.0px;" width="50" height="48" viewBox="0 0 50 48"><circle cx="24" cy="24" r="18" fill="none" stroke="#f0f0f0" stroke-width="3" stroke-dasharray="8 5"/><circle cx="24" cy="24" r="18" fill="none" stroke="#b03040" stroke-width="3" stroke-dasharray="5 8" stroke-dashoffset="-8"/><path d="M24 12 V20 M24 28 V36 M12 24 H20 M28 24 H36" stroke="#f0f0f0" stroke-width="2"/></svg>
<svg class="s" style="left:144.0px;top:466.0px;" width="50" height="50" viewBox="0 0 50 50"><path d="M25 4 L20 11 H30 Z M25 46 L20 39 H30 Z M4 25 L11 20 V30 Z M46 25 L39 20 V30 Z" fill="#f0f0f0"/><path d="M25 13 V20 M25 30 V37 M13 25 H20 M30 25 H37" stroke="#f0f0f0" stroke-width="3"/></svg>
<svg class="s" style="left:144.0px;top:534.0px;" width="50" height="50" viewBox="0 0 50 50"><path d="M10 22 A15 15 0 0 1 38 16 M40 28 A15 15 0 0 1 12 34" fill="none" stroke="#f0f0f0" stroke-width="3"/><path d="M33 12 L43 14 L39 22 Z M17 38 L7 36 L11 28 Z" fill="#f0f0f0"/><path d="M25 18 L31 25 L25 32 L19 25 Z" fill="#a0a0a0"/></svg>
<svg class="s" style="left:144.0px;top:603.0px;" width="50" height="50" viewBox="0 0 50 50"><rect x="8" y="24" width="18" height="18" fill="#f0f0f0"/><path d="M14 18 V9 H42 V37 H32 M26 24 L36 14 M30 13 H37 V20" fill="none" stroke="#f0f0f0" stroke-width="2.5"/></svg>
<svg class="s" style="left:144.0px;top:672.0px;" width="50" height="50" viewBox="0 0 50 50"><circle cx="25" cy="25" r="17" fill="none" stroke="#f0f0f0" stroke-width="3" stroke-dasharray="10 6"/><rect x="17" y="17" width="16" height="16" fill="#f0f0f0"/><path d="M25 4 L20 10 H30 Z M25 46 L20 40 H30 Z M4 25 L10 20 V30 Z M46 25 L40 20 V30 Z" fill="#f0f0f0"/></svg>
<svg class="s" style="left:144.0px;top:754.0px;" width="50" height="50" viewBox="0 0 50 50"><path d="M10 33 L34 9 L40 15 L16 39 L8 41 Z" fill="#f0f0f0"/><path d="M6 44 C14 36 22 36 28 40 C34 44 40 42 44 38" fill="none" stroke="#7fd0b0" stroke-width="2.5"/></svg>
<svg class="s" style="left:144.0px;top:822.0px;" width="50" height="52" viewBox="0 0 50 52"><path d="M8 6 V44 H46" fill="none" stroke="#f0f0f0" stroke-width="4"/><path d="M12 42 V18 A24 24 0 0 1 36 42 Z" fill="#8fdcb8"/><path d="M8 40 H48" stroke="#f0f0f0" stroke-width="3"/></svg>
<svg class="s" style="left:144.0px;top:904.0px;" width="50" height="52" viewBox="0 0 50 52"><path d="M5 10 H15 M10 5 V15" stroke="#8fdcb8" stroke-width="3.5"/><path d="M16 20 L24 12 H44 V34 L36 42 H16 Z M16 20 H36 V42 M36 20 L44 12" fill="none" stroke="#f0f0f0" stroke-width="2.5"/></svg>
<svg class="s" style="left:144.0px;top:972.0px;" width="50" height="52" viewBox="0 0 50 52"><rect x="16" y="16" width="24" height="26" fill="none" stroke="#d08080" stroke-width="2.5"/><path d="M20 22 H44 V46 H22" fill="none" stroke="#8fdcb8" stroke-width="2"/><circle cx="11" cy="9" r="5" fill="none" stroke="#f0f0f0" stroke-width="2.5"/><circle cx="8" cy="22" r="5" fill="none" stroke="#f0f0f0" stroke-width="2.5"/><path d="M14 12 L30 30 M12 19 L28 12" stroke="#f0f0f0" stroke-width="2.5"/></svg>
<svg class="s" style="left:197.0px;top:361.0px;" width="9" height="9" viewBox="0 0 9 9"><path d="M9 0 V9 H0 Z" fill="#8a8a8a"/></svg>
<svg class="s" style="left:197.0px;top:650.0px;" width="9" height="9" viewBox="0 0 9 9"><path d="M9 0 V9 H0 Z" fill="#8a8a8a"/></svg>
<svg class="s" style="left:197.0px;top:801.0px;" width="9" height="9" viewBox="0 0 9 9"><path d="M9 0 V9 H0 Z" fill="#8a8a8a"/></svg>
<svg class="s" style="left:197.0px;top:952.0px;" width="9" height="9" viewBox="0 0 9 9"><path d="M9 0 V9 H0 Z" fill="#8a8a8a"/></svg>
<svg class="s" style="left:197.0px;top:1020.5px;" width="9" height="9" viewBox="0 0 9 9"><path d="M9 0 V9 H0 Z" fill="#8a8a8a"/></svg>
<div class="t" style="left:245.0px;top:305.6px;font-size:22px;line-height:30.8px;color:#e6e6e6;font-weight:normal;text-shadow:0 0 3px #000">用户透视</div>
<div class="t" style="left:245.5px;top:341.2px;font-size:22.5px;line-height:31.5px;color:#e6e6e6;font-weight:normal;text-shadow:0 0 3px #000;letter-spacing:0.35px">(1) Collection <span style="font-size:26px;position:relative;top:-1px">|</span> Spiral</div>
<svg class="s" style="left:0;top:0" width="3248" height="600"><line x1="2508.7" y1="389" x2="2445" y2="393" stroke="#d04050" stroke-width="4"/><line x1="2508.7" y1="389" x2="2508.7" y2="334" stroke="#4a80d0" stroke-width="4"/><line x1="2508.7" y1="389" x2="2517.4" y2="422" stroke="#78b030" stroke-width="4"/><circle cx="2572" cy="383.8" r="15" fill="none" stroke="#c03a4a" stroke-width="2.5"/><circle cx="2572" cy="383.8" r="12" fill="rgba(140,40,50,0.55)"/><circle cx="2500" cy="356.5" r="14" fill="none" stroke="#6a9a30" stroke-width="2.5"/><circle cx="2509.4" cy="443.8" r="14" fill="none" stroke="#3a64a8" stroke-width="2.5"/><circle cx="2508.7" cy="334" r="16.5" fill="#3d7cde"/><circle cx="2445" cy="393" r="16.5" fill="#e0404e"/><circle cx="2517.4" cy="422" r="16.5" fill="#80c030"/><text x="2508.7" y="342" text-anchor="middle" font-family="Liberation Sans" font-weight="bold" font-size="21" fill="#101830">Z</text><text x="2445" y="401" text-anchor="middle" font-family="Liberation Sans" font-weight="bold" font-size="21" fill="#300808">X</text><text x="2517.4" y="430" text-anchor="middle" font-family="Liberation Sans" font-weight="bold" font-size="21" fill="#183008">Y</text></svg>
<div class="b" style="left:2537px;top:471.4px;width:54px;height:54px;border-radius:27px;background:rgba(30,30,30,0.55)"></div>
<div class="b" style="left:2537px;top:531.5px;width:54px;height:54px;border-radius:27px;background:rgba(30,30,30,0.55)"></div>
<div class="b" style="left:2537px;top:591.5px;width:54px;height:54px;border-radius:27px;background:rgba(30,30,30,0.55)"></div>
<div class="b" style="left:2537px;top:651.5px;width:54px;height:54px;border-radius:27px;background:rgba(30,30,30,0.55)"></div>
<svg class="s" style="left:2546.0px;top:481.0px;" width="36" height="36" viewBox="0 0 36 36"><circle cx="20" cy="15" r="10" fill="none" stroke="#e6e6e6" stroke-width="3"/><path d="M20 10 V20 M15 15 H25" stroke="#e6e6e6" stroke-width="2.5"/><path d="M13 22 L4 31" stroke="#e6e6e6" stroke-width="4" stroke-linecap="round"/></svg>
<svg class="s" style="left:2546.0px;top:541.0px;" width="36" height="36" viewBox="0 0 36 36"><path d="M8 18 V10 M13 17 V5 M18 17 V4 M23 17 V6 M28 20 V12 C28 26 24 32 17 32 C11 32 8 27 5 21 L3 17" fill="none" stroke="#e6e6e6" stroke-width="4" stroke-linecap="round"/><path d="M8 16 H28 V22 C26 30 12 30 8 22 Z" fill="#e6e6e6"/></svg>
<svg class="s" style="left:2546.0px;top:601.0px;" width="36" height="36" viewBox="0 0 36 36"><circle cx="11" cy="9" r="6" fill="none" stroke="#e6e6e6" stroke-width="2.5"/><circle cx="23" cy="9" r="6" fill="none" stroke="#e6e6e6" stroke-width="2.5"/><rect x="8" y="18" width="17" height="12" fill="none" stroke="#e6e6e6" stroke-width="2.5"/><path d="M25 24 L33 19 V29 Z M4 21 V27" fill="none" stroke="#e6e6e6" stroke-width="2.5"/></svg>
<svg class="s" style="left:2546.0px;top:661.0px;" width="36" height="36" viewBox="0 0 36 36"><path d="M9 5 H27 L33 31 H3 Z M7 14 H29 M5 22 H31 M15 5 L13 31 M21 5 L23 31" fill="none" stroke="#e6e6e6" stroke-width="2.5"/></svg>
<svg class="s" style="left:2596.0px;top:325.0px;" width="12" height="24" viewBox="0 0 12 24"><path d="M10 3 L3 12 L10 21" fill="none" stroke="#9a9a9a" stroke-width="2.5"/></svg>
<div class="b" style="left:114.0px;top:1640.0px;width:2492.0px;height:113.0px;background:#1d1d1d;border-radius:10px;"></div>
<div class="b" style="left:114.0px;top:1640.0px;width:2492.0px;height:49.0px;background:#303030;border-radius:0px;border-radius:10px 10px 0 0"></div>
<div class="b" style="left:130.0px;top:1647.0px;width:60.0px;height:37.0px;background:#282828;border-radius:6px;"></div>
<svg class="s" style="left:137.0px;top:1651.0px;" width="32" height="30" viewBox="0 0 32 30"><circle cx="15" cy="15" r="13" fill="#e6e6e6"/><path d="M18 8 L11 15 L18 22" fill="none" stroke="#1e1e1e" stroke-width="3.2"/></svg>
<svg class="s" style="left:170.0px;top:1660.0px;" width="16" height="12" viewBox="0 0 16 12"><path d="M2 3.6 L8 8.4 L14 3.6" fill="none" stroke="#d0d0d0" stroke-width="2.2" stroke-linecap="round" stroke-linejoin="round"/></svg>
<div class="b" style="left:208.0px;top:1647.0px;width:86.0px;height:37.0px;background:#282828;border-radius:6px;"></div>
<div class="t" style="left:219.0px;top:1650.1px;font-size:22px;line-height:30.8px;color:#e6e6e6;font-weight:normal;">回放</div>
<svg class="s" style="left:274.0px;top:1660.0px;" width="16" height="12" viewBox="0 0 16 12"><path d="M2 3.6 L8 8.4 L14 3.6" fill="none" stroke="#d0d0d0" stroke-width="2.2" stroke-linecap="round" stroke-linejoin="round"/></svg>
<div class="b" style="left:295.6px;top:1647.0px;width:88.4px;height:37.0px;background:#282828;border-radius:6px;"></div>
<div class="t" style="left:310.7px;top:1650.1px;font-size:22px;line-height:30.8px;color:#e6e6e6;font-weight:normal;">插帧</div>
<svg class="s" style="left:364.0px;top:1660.0px;" width="16" height="12" viewBox="0 0 16 12"><path d="M2 3.6 L8 8.4 L14 3.6" fill="none" stroke="#d0d0d0" stroke-width="2.2" stroke-linecap="round" stroke-linejoin="round"/></svg>
<div class="t" style="left:409.0px;top:1650.1px;font-size:22px;line-height:30.8px;color:#e0e0e0;font-weight:normal;">视图</div>
<div class="t" style="left:482.7px;top:1650.1px;font-size:22px;line-height:30.8px;color:#e0e0e0;font-weight:normal;">标记</div>
<div class="b" style="left:1175.0px;top:1647.0px;width:39.0px;height:37.0px;background:#474747;border-radius:6px;"></div>
<svg class="s" style="left:1182.0px;top:1654.0px;" width="26" height="26" viewBox="0 0 26 26"><circle cx="13" cy="13" r="9" fill="none" stroke="#bdbdbd" stroke-width="2"/></svg>
<div class="b" style="left:1214.0px;top:1647.0px;width:39.0px;height:37.0px;background:#282828;border-radius:6px;"></div>
<svg class="s" style="left:1226.0px;top:1662.0px;" width="14" height="10" viewBox="0 0 14 10"><path d="M2 3.0 L7 7.0 L12 3.0" fill="none" stroke="#555" stroke-width="2.2" stroke-linecap="round" stroke-linejoin="round"/></svg>
<div class="b" style="left:1265.0px;top:1647.0px;width:237.0px;height:37.0px;background:#3a3a3a;border-radius:6px;"></div>
<svg class="s" style="left:1270.0px;top:1651.0px;" width="30" height="30" viewBox="0 0 30 30"><path d="M6 5 V25 M24 5 L10 15 L24 25 Z" stroke="#e6e6e6" stroke-width="3" fill="#e6e6e6"/></svg>
<div class="b" style="left:1303.5px;top:1647.0px;width:2.0px;height:37.0px;background:#2a2a2a;border-radius:0px;"></div>
<svg class="s" style="left:1309.5px;top:1651.0px;" width="30" height="30" viewBox="0 0 30 30"><path d="M2 15 L9 8 L16 15 L9 22 Z M28 7 V23 L18 15 Z" fill="#e6e6e6"/></svg>
<div class="b" style="left:1343.0px;top:1647.0px;width:2.0px;height:37.0px;background:#2a2a2a;border-radius:0px;"></div>
<svg class="s" style="left:1349.0px;top:1651.0px;" width="30" height="30" viewBox="0 0 30 30"><path d="M22 5 V25 L8 15 Z" fill="#e6e6e6"/></svg>
<div class="b" style="left:1382.5px;top:1647.0px;width:2.0px;height:37.0px;background:#2a2a2a;border-radius:0px;"></div>
<svg class="s" style="left:1388.5px;top:1651.0px;" width="30" height="30" viewBox="0 0 30 30"><path d="M8 5 V25 L22 15 Z" fill="#e6e6e6"/></svg>
<div class="b" style="left:1422.0px;top:1647.0px;width:2.0px;height:37.0px;background:#2a2a2a;border-radius:0px;"></div>
<svg class="s" style="left:1428.0px;top:1651.0px;" width="30" height="30" viewBox="0 0 30 30"><path d="M2 7 V23 L12 15 Z M14 15 L21 8 L28 15 L21 22 Z" fill="#e6e6e6"/></svg>
<div class="b" style="left:1461.5px;top:1647.0px;width:2.0px;height:37.0px;background:#2a2a2a;border-radius:0px;"></div>
<svg class="s" style="left:1467.5px;top:1651.0px;" width="30" height="30" viewBox="0 0 30 30"><path d="M24 5 V25 M6 5 L20 15 L6 25 Z" stroke="#e6e6e6" stroke-width="3" fill="#e6e6e6"/></svg>
<div class="b" style="left:2048.0px;top:1647.0px;width:146.0px;height:35.5px;background:#545454;border-radius:7px;"></div>
<div class="t" style="left:1621.0px;width:1000px;text-align:center;top:1649.6px;font-size:22px;line-height:30.8px;color:#e6e6e6;font-weight:normal;">1</div>
<div class="b" style="left:2209.0px;top:1647.0px;width:382.0px;height:35.5px;background:#545454;border-radius:7px;"></div>
<div class="b" style="left:2209.0px;top:1647.0px;width:36.0px;height:35.5px;background:#474747;border-radius:0px;border-radius:7px 0 0 7px"></div>
<div class="b" style="left:2418.0px;top:1647.0px;width:2.0px;height:35.5px;background:#3d3d3d;border-radius:0px;"></div>
<svg class="s" style="left:2212.0px;top:1650.0px;" width="30" height="30" viewBox="0 0 30 30"><circle cx="15" cy="17" r="10" fill="none" stroke="#e0e0e0" stroke-width="2.2"/><path d="M15 11 V17 H20 M12 4 H18 M23 6 L26 9" stroke="#e0e0e0" stroke-width="2" fill="none"/></svg>
<div class="t" style="left:2276.0px;top:1649.6px;font-size:22px;line-height:30.8px;color:#e6e6e6;font-weight:normal;">起始</div>
<div class="t" style="left:1393.0px;width:1000px;text-align:right;top:1649.6px;font-size:22px;line-height:30.8px;color:#e6e6e6;font-weight:normal;">1</div>
<div class="t" style="left:2451.0px;top:1649.6px;font-size:22px;line-height:30.8px;color:#e6e6e6;font-weight:normal;">结束</div>
<div class="t" style="left:1568.0px;width:1000px;text-align:right;top:1649.6px;font-size:22px;line-height:30.8px;color:#e6e6e6;font-weight:normal;">250</div>
<div class="t" style="left:-210.0px;width:1000px;text-align:center;top:1697.6px;font-size:22px;line-height:30.8px;color:#b4b4b4;font-weight:normal;">10</div>
<div class="t" style="left:-117.3px;width:1000px;text-align:center;top:1697.6px;font-size:22px;line-height:30.8px;color:#b4b4b4;font-weight:normal;">20</div>
<div class="t" style="left:-24.6px;width:1000px;text-align:center;top:1697.6px;font-size:22px;line-height:30.8px;color:#b4b4b4;font-weight:normal;">30</div>
<div class="t" style="left:68.1px;width:1000px;text-align:center;top:1697.6px;font-size:22px;line-height:30.8px;color:#b4b4b4;font-weight:normal;">40</div>
<div class="t" style="left:160.8px;width:1000px;text-align:center;top:1697.6px;font-size:22px;line-height:30.8px;color:#b4b4b4;font-weight:normal;">50</div>
<div class="t" style="left:253.5px;width:1000px;text-align:center;top:1697.6px;font-size:22px;line-height:30.8px;color:#b4b4b4;font-weight:normal;">60</div>
<div class="t" style="left:346.2px;width:1000px;text-align:center;top:1697.6px;font-size:22px;line-height:30.8px;color:#b4b4b4;font-weight:normal;">70</div>
<div class="t" style="left:438.9px;width:1000px;text-align:center;top:1697.6px;font-size:22px;line-height:30.8px;color:#b4b4b4;font-weight:normal;">80</div>
<div class="t" style="left:531.6px;width:1000px;text-align:center;top:1697.6px;font-size:22px;line-height:30.8px;color:#b4b4b4;font-weight:normal;">90</div>
<div class="t" style="left:624.3px;width:1000px;text-align:center;top:1697.6px;font-size:22px;line-height:30.8px;color:#b4b4b4;font-weight:normal;">100</div>
<div class="t" style="left:717.0px;width:1000px;text-align:center;top:1697.6px;font-size:22px;line-height:30.8px;color:#b4b4b4;font-weight:normal;">110</div>
<div class="t" style="left:809.7px;width:1000px;text-align:center;top:1697.6px;font-size:22px;line-height:30.8px;color:#b4b4b4;font-weight:normal;">120</div>
<div class="t" style="left:902.4px;width:1000px;text-align:center;top:1697.6px;font-size:22px;line-height:30.8px;color:#b4b4b4;font-weight:normal;">130</div>
<div class="t" style="left:995.1px;width:1000px;text-align:center;top:1697.6px;font-size:22px;line-height:30.8px;color:#b4b4b4;font-weight:normal;">140</div>
<div class="t" style="left:1087.8px;width:1000px;text-align:center;top:1697.6px;font-size:22px;line-height:30.8px;color:#b4b4b4;font-weight:normal;">150</div>
<div class="t" style="left:1180.5px;width:1000px;text-align:center;top:1697.6px;font-size:22px;line-height:30.8px;color:#b4b4b4;font-weight:normal;">160</div>
<div class="t" style="left:1273.2px;width:1000px;text-align:center;top:1697.6px;font-size:22px;line-height:30.8px;color:#b4b4b4;font-weight:normal;">170</div>
<div class="t" style="left:1365.9px;width:1000px;text-align:center;top:1697.6px;font-size:22px;line-height:30.8px;color:#b4b4b4;font-weight:normal;">180</div>
<div class="t" style="left:1458.6px;width:1000px;text-align:center;top:1697.6px;font-size:22px;line-height:30.8px;color:#b4b4b4;font-weight:normal;">190</div>
<div class="t" style="left:1551.3px;width:1000px;text-align:center;top:1697.6px;font-size:22px;line-height:30.8px;color:#b4b4b4;font-weight:normal;">200</div>
<div class="t" style="left:1644.0px;width:1000px;text-align:center;top:1697.6px;font-size:22px;line-height:30.8px;color:#b4b4b4;font-weight:normal;">210</div>
<div class="t" style="left:1736.7px;width:1000px;text-align:center;top:1697.6px;font-size:22px;line-height:30.8px;color:#b4b4b4;font-weight:normal;">220</div>
<div class="t" style="left:1829.4px;width:1000px;text-align:center;top:1697.6px;font-size:22px;line-height:30.8px;color:#b4b4b4;font-weight:normal;">230</div>
<div class="t" style="left:1922.1px;width:1000px;text-align:center;top:1697.6px;font-size:22px;line-height:30.8px;color:#b4b4b4;font-weight:normal;">240</div>
<div class="t" style="left:2014.8px;width:1000px;text-align:center;top:1697.6px;font-size:22px;line-height:30.8px;color:#b4b4b4;font-weight:normal;">250</div>
<div class="b" style="left:181.0px;top:1696.0px;width:48.0px;height:34.0px;background:#4772b3;border-radius:7px;"></div>
<div class="t" style="left:-295.0px;width:1000px;text-align:center;top:1697.6px;font-size:22px;line-height:30.8px;color:#ffffff;font-weight:normal;">1</div>
<div class="b" style="left:204.0px;top:1730.0px;width:3.0px;height:23.0px;background:#4772b3;border-radius:0px;"></div>
<div class="b" style="left:126.0px;top:1735.0px;width:2470.0px;height:15.0px;background:#282828;border-radius:7px;"></div>
<div class="b" style="left:136.0px;top:1737.0px;width:2456.0px;height:11.0px;background:#5a5a5a;border-radius:6px;"></div>
<div class="b" style="left:127px;top:1734px;width:16px;height:16px;border-radius:8px;background:#2a2a2a;box-shadow:inset 0 0 0 2px #5a5a5a"></div>
<div class="b" style="left:2584px;top:1734px;width:16px;height:16px;border-radius:8px;background:#2a2a2a;box-shadow:inset 0 0 0 2px #5a5a5a"></div>
<svg class="s" style="left:116.0px;top:1703.0px;" width="14" height="24" viewBox="0 0 14 24"><path d="M3 4 L10 12 L3 20" fill="none" stroke="#7a7a7a" stroke-width="2"/></svg>
<div class="b" style="left:2615.0px;top:187.0px;width:517.0px;height:500.6px;background:#2b2b2b;border-radius:10px;"></div>
<div class="b" style="left:2631.7px;top:192.6px;width:61.3px;height:37.4px;background:#252525;border-radius:6px;box-shadow:inset 0 0 0 1px #303030"></div>
<svg class="s" style="left:2638.0px;top:197.0px;" width="40" height="30" viewBox="0 0 40 30"><rect x="2" y="3" width="8" height="5" fill="#d8d8d8"/><path d="M5 8 V24 H12 M5 16 H12" fill="none" stroke="#d8d8d8" stroke-width="2"/><rect x="13" y="12" width="12" height="6" fill="#d8d8d8"/><rect x="13" y="21" width="12" height="6" fill="#d8d8d8"/></svg>
<svg class="s" style="left:2675.0px;top:207.0px;" width="16" height="12" viewBox="0 0 16 12"><path d="M2 3.6 L8 8.4 L14 3.6" fill="none" stroke="#d0d0d0" stroke-width="2.2" stroke-linecap="round" stroke-linejoin="round"/></svg>
<div class="b" style="left:2704.0px;top:192.6px;width:63.6px;height:37.4px;background:#252525;border-radius:6px;box-shadow:inset 0 0 0 1px #303030"></div>
<svg class="s" style="left:2712.0px;top:197.0px;" width="34" height="30" viewBox="0 0 34 30"><rect x="10" y="3" width="18" height="16" fill="none" stroke="#d8d8d8" stroke-width="2.2"/><path d="M12 17 L17 9 L22 17 Z" fill="#d8d8d8"/><circle cx="23" cy="7" r="2" fill="#d8d8d8"/><path d="M6 8 V23 H22 M2 12 V27 H18" fill="none" stroke="#d8d8d8" stroke-width="2"/></svg>
<svg class="s" style="left:2749.0px;top:207.0px;" width="16" height="12" viewBox="0 0 16 12"><path d="M2 3.6 L8 8.4 L14 3.6" fill="none" stroke="#d0d0d0" stroke-width="2.2" stroke-linecap="round" stroke-linejoin="round"/></svg>
<div class="b" style="left:2800.5px;top:192.6px;width:228.5px;height:37.4px;background:#1e1e1e;border-radius:8px;box-shadow:inset 0 0 0 1px #2e2e2e"></div>
<svg class="s" style="left:2808.0px;top:196.0px;" width="32" height="32" viewBox="0 0 32 32"><circle cx="19" cy="12" r="8" fill="none" stroke="#d8d8d8" stroke-width="2.2"/><path d="M13 18 L4 28" stroke="#d8d8d8" stroke-width="2.2"/></svg>
<div class="t" style="left:2852.0px;top:196.1px;font-size:22px;line-height:30.8px;color:#6e6e6e;font-weight:normal;">搜索</div>
<div class="b" style="left:3063.0px;top:192.6px;width:61.5px;height:37.4px;background:#252525;border-radius:6px;box-shadow:inset 0 0 0 1px #303030"></div>
<svg class="s" style="left:3068.0px;top:196.0px;" width="34" height="32" viewBox="0 0 34 32"><path d="M3 4 H25 L16 15 V28 L12 24 V15 Z" fill="none" stroke="#d8d8d8" stroke-width="2.2"/></svg>
<svg class="s" style="left:3104.0px;top:207.0px;" width="16" height="12" viewBox="0 0 16 12"><path d="M2 3.6 L8 8.4 L14 3.6" fill="none" stroke="#d0d0d0" stroke-width="2.2" stroke-linecap="round" stroke-linejoin="round"/></svg>
<svg class="s" style="left:2659.0px;top:245.0px;" width="32" height="30" viewBox="0 0 32 30"><rect x="1" y="1" width="28" height="7" fill="#e0e0e0"/><rect x="3" y="10" width="24" height="17" fill="#e0e0e0"/><rect x="11" y="13" width="8" height="3" rx="1.5" fill="#282828"/></svg>
<div class="t" style="left:2703.0px;top:244.1px;font-size:22px;line-height:30.8px;color:#cfcfcf;font-weight:normal;">场景集合</div>
<svg class="s" style="left:2665.0px;top:292.0px;" width="18" height="14" viewBox="0 0 18 14"><path d="M2 4.2 L9 9.8 L16 4.2" fill="none" stroke="#c8c8c8" stroke-width="2.2" stroke-linecap="round" stroke-linejoin="round"/></svg>
<div class="b" style="left:2695.0px;top:280.0px;width:38.7px;height:38.0px;background:#4a4a4a;border-radius:7px;"></div>
<svg class="s" style="left:2699.0px;top:285.0px;" width="32" height="30" viewBox="0 0 32 30"><rect x="2" y="2" width="26" height="7" fill="#e6e6e6"/><rect x="4" y="11" width="22" height="16" fill="#e6e6e6"/><rect x="11" y="14" width="8" height="3" rx="1.5" fill="#4a4a4a"/></svg>
<div class="t" style="left:2742.7px;top:284.8px;font-size:22.5px;line-height:31.5px;color:#f0f0f0;font-weight:normal;letter-spacing:0.45px">Collection</div>
<svg class="s" style="left:3004.0px;top:288.0px;" width="22" height="22" viewBox="0 0 22 22"><rect x="0" y="0" width="21" height="21" rx="2" fill="#e6e6e6"/><path d="M4 11 L9 16 L17 5" fill="none" stroke="#1e1e1e" stroke-width="3"/></svg>
<svg class="s" style="left:3041.0px;top:289.0px;" width="28" height="20" viewBox="0 0 28 20"><path d="M2 10 C7 2 21 2 26 10 C21 18 7 18 2 10 Z" fill="#e6e6e6"/><circle cx="14" cy="10" r="5" fill="#2b2b2b"/><circle cx="14" cy="10" r="2.5" fill="#e6e6e6"/></svg>
<svg class="s" style="left:3081.0px;top:287.0px;" width="28" height="24" viewBox="0 0 28 24"><path d="M3 6 H8 L10 2 H18 L20 6 H25 V22 H3 Z" fill="#e6e6e6"/><circle cx="14" cy="14" r="5.5" fill="#2b2b2b"/><circle cx="14" cy="14" r="3" fill="#e6e6e6"/></svg>
<div class="b" style="left:2673.0px;top:328.0px;width:2.0px;height:102.0px;background:#3a3a3a;border-radius:0px;"></div>
<svg class="s" style="left:2708.0px;top:332.0px;" width="12" height="16" viewBox="0 0 12 16"><path d="M3.6 2 L8.4 8 L3.6 14" fill="none" stroke="#c8c8c8" stroke-width="2.2" stroke-linecap="round" stroke-linejoin="round"/></svg>
<svg class="s" style="left:2738.0px;top:323.0px;" width="32" height="32" viewBox="0 0 32 32"><circle cx="9" cy="8" r="6" fill="#e09a58"/><circle cx="22" cy="8" r="7" fill="#e09a58"/><circle cx="9" cy="8" r="2" fill="#282828"/><circle cx="22" cy="8" r="2" fill="#282828"/><rect x="3" y="15" width="22" height="14" fill="#e09a58"/><path d="M25 22 L31 17 V29 Z" fill="#e09a58"/></svg>
<div class="t" style="left:2782.0px;top:325.2px;font-size:22.5px;line-height:31.5px;color:#d8d8d8;font-weight:normal;letter-spacing:0.1px">Camera</div>
<div class="b" style="left:2901.0px;top:321.0px;width:40.0px;height:37.0px;background:#3e3e3e;border-radius:8px;"></div>
<svg class="s" style="left:2905.0px;top:325.0px;" width="32" height="30" viewBox="0 0 32 30"><ellipse cx="10" cy="9" rx="7" ry="6" fill="none" stroke="#40c0a0" stroke-width="2.2"/><ellipse cx="21" cy="9" rx="6" ry="6" fill="none" stroke="#40c0a0" stroke-width="2.2"/><rect x="6" y="16" width="16" height="10" fill="none" stroke="#40c0a0" stroke-width="2.2"/><path d="M22 21 L29 16 V27 Z" fill="none" stroke="#40c0a0" stroke-width="2"/></svg>
<svg class="s" style="left:3041.0px;top:330.0px;" width="28" height="20" viewBox="0 0 28 20"><path d="M2 10 C7 2 21 2 26 10 C21 18 7 18 2 10 Z" fill="#e6e6e6"/><circle cx="14" cy="10" r="5" fill="#2b2b2b"/><circle cx="14" cy="10" r="2.5" fill="#e6e6e6"/></svg>
<svg class="s" style="left:3081.0px;top:328.0px;" width="28" height="24" viewBox="0 0 28 24"><path d="M3 6 H8 L10 2 H18 L20 6 H25 V22 H3 Z" fill="#e6e6e6"/><circle cx="14" cy="14" r="5.5" fill="#2b2b2b"/><circle cx="14" cy="14" r="3" fill="#e6e6e6"/></svg>
<svg class="s" style="left:2708.0px;top:372.0px;" width="12" height="16" viewBox="0 0 12 16"><path d="M3.6 2 L8.4 8 L3.6 14" fill="none" stroke="#c8c8c8" stroke-width="2.2" stroke-linecap="round" stroke-linejoin="round"/></svg>
<svg class="s" style="left:2740.0px;top:361.0px;" width="30" height="34" viewBox="0 0 30 34"><circle cx="14" cy="13" r="11" fill="#e09a58"/><rect x="9" y="22" width="10" height="4" fill="#e09a58"/><rect x="10" y="28" width="8" height="3" fill="#e09a58"/><path d="M10 13 H18 M12 13 V19 M16 13 V19" stroke="#282828" stroke-width="1.8"/></svg>
<div class="t" style="left:2782.0px;top:364.2px;font-size:22.5px;line-height:31.5px;color:#d8d8d8;font-weight:normal;">Light</div>
<svg class="s" style="left:2877.0px;top:363.0px;" width="30" height="34" viewBox="0 0 30 34"><circle cx="15" cy="14" r="12" fill="none" stroke="#40c0a0" stroke-width="2.2"/><circle cx="15" cy="14" r="2.5" fill="#40c0a0"/><path d="M15 17 V32" stroke="#40c0a0" stroke-width="2" stroke-dasharray="3 3"/></svg>
<svg class="s" style="left:3041.0px;top:370.0px;" width="28" height="20" viewBox="0 0 28 20"><path d="M2 10 C7 2 21 2 26 10 C21 18 7 18 2 10 Z" fill="#e6e6e6"/><circle cx="14" cy="10" r="5" fill="#2b2b2b"/><circle cx="14" cy="10" r="2.5" fill="#e6e6e6"/></svg>
<svg class="s" style="left:3081.0px;top:368.0px;" width="28" height="24" viewBox="0 0 28 24"><path d="M3 6 H8 L10 2 H18 L20 6 H25 V22 H3 Z" fill="#e6e6e6"/><circle cx="14" cy="14" r="5.5" fill="#2b2b2b"/><circle cx="14" cy="14" r="3" fill="#e6e6e6"/></svg>
<div class="b" style="left:2615.0px;top:397.7px;width:517.0px;height:39.6px;background:#334d80;border-radius:0px;"></div>
<div class="b" style="left:2673.0px;top:397.7px;width:2.0px;height:32.3px;background:#5a6d90;border-radius:0px;"></div>
<svg class="s" style="left:2708.0px;top:411.0px;" width="12" height="16" viewBox="0 0 12 16"><path d="M3.6 2 L8.4 8 L3.6 14" fill="none" stroke="#d0d8e8" stroke-width="2.2" stroke-linecap="round" stroke-linejoin="round"/></svg>
<div class="b" style="left:2735.0px;top:400.0px;width:38.0px;height:38.0px;background:#4a63a0;border-radius:7px;"></div>
<svg class="s" style="left:2738.0px;top:404.0px;" width="32" height="30" viewBox="0 0 32 30"><path d="M10 4 C22 4 28 10 26 18 C24 26 14 29 6 27" fill="none" stroke="#e8a050" stroke-width="5" stroke-linecap="round"/></svg>
<div class="t" style="left:2782.0px;top:404.2px;font-size:22.5px;line-height:31.5px;color:#f5b860;font-weight:normal;letter-spacing:0.4px">Spiral</div>
<svg class="s" style="left:2883.0px;top:403.0px;" width="34" height="32" viewBox="0 0 34 32"><rect x="9" y="2" width="7" height="7" fill="none" stroke="#40c0a0" stroke-width="2"/><rect x="2" y="22" width="7" height="7" fill="none" stroke="#40c0a0" stroke-width="2"/><path d="M16 6 C30 6 30 24 9 25" fill="none" stroke="#40c0a0" stroke-width="2"/></svg>
<svg class="s" style="left:3041.0px;top:409.0px;" width="28" height="20" viewBox="0 0 28 20"><path d="M2 10 C7 2 21 2 26 10 C21 18 7 18 2 10 Z" fill="#f0f0f0"/><circle cx="14" cy="10" r="5" fill="#334d80"/><circle cx="14" cy="10" r="2.5" fill="#f0f0f0"/></svg>
<svg class="s" style="left:3081.0px;top:407.0px;" width="28" height="24" viewBox="0 0 28 24"><path d="M3 6 H8 L10 2 H18 L20 6 H25 V22 H3 Z" fill="#f0f0f0"/><circle cx="14" cy="14" r="5.5" fill="#334d80"/><circle cx="14" cy="14" r="3" fill="#f0f0f0"/></svg>
<div class="b" style="left:2615.0px;top:696.0px;width:517.0px;height:1058.0px;background:#2e2e2e;border-radius:10px;"></div>
<div class="b" style="left:2615.0px;top:696.0px;width:517.0px;height:49.0px;background:#2f2f2f;border-radius:0px;border-radius:10px 10px 0 0"></div>
<div class="b" style="left:2632.0px;top:703.0px;width:60.0px;height:35.0px;background:#282828;border-radius:6px;"></div>
<svg class="s" style="left:2638.0px;top:706.0px;" width="34" height="30" viewBox="0 0 34 30"><rect x="1" y="2" width="20" height="11" rx="5.5" fill="none" stroke="#e6e6e6" stroke-width="2.2"/><rect x="1" y="2" width="10" height="11" rx="5" fill="#e6e6e6"/><rect x="1" y="17" width="20" height="11" rx="5.5" fill="#e6e6e6"/><rect x="14" y="19" width="6" height="7" fill="#1e1e1e"/></svg>
<svg class="s" style="left:2673.0px;top:714.0px;" width="16" height="12" viewBox="0 0 16 12"><path d="M2 3.6 L8 8.4 L14 3.6" fill="none" stroke="#d0d0d0" stroke-width="2.2" stroke-linecap="round" stroke-linejoin="round"/></svg>
<div class="b" style="left:2753.0px;top:702.0px;width:226.5px;height:35.0px;background:#1e1e1e;border-radius:8px;box-shadow:inset 0 0 0 1px #2e2e2e"></div>
<svg class="s" style="left:2758.0px;top:704.0px;" width="32" height="32" viewBox="0 0 32 32"><circle cx="19" cy="12" r="8" fill="none" stroke="#d8d8d8" stroke-width="2.2"/><path d="M13 18 L4 28" stroke="#d8d8d8" stroke-width="2.2"/></svg>
<div class="t" style="left:2802.0px;top:704.1px;font-size:22px;line-height:30.8px;color:#6e6e6e;font-weight:normal;">搜索</div>
<div class="b" style="left:3080.0px;top:702.0px;width:36.5px;height:35.0px;background:#282828;border-radius:6px;"></div>
<svg class="s" style="left:3090.0px;top:714.0px;" width="16" height="12" viewBox="0 0 16 12"><path d="M2 3.6 L8 8.4 L14 3.6" fill="none" stroke="#d0d0d0" stroke-width="2.2" stroke-linecap="round" stroke-linejoin="round"/></svg>
<div class="b" style="left:2615.0px;top:745.0px;width:57.0px;height:1009.0px;background:#1f1f1f;border-radius:0px;border-radius:0 0 0 10px"></div>
<div class="b" style="left:2615.0px;top:1203.5px;width:57.0px;height:49.5px;background:#2f2f2f;border-radius:0px;border-radius:8px 0 0 8px"></div>
<svg class="s" style="left:2631.0px;top:770.0px;" width="32" height="32" viewBox="0 0 32 32"><g transform="translate(16 16) scale(1.12) translate(-15 -15)"><path d="M7 2 V14" stroke="#c8c8c8" stroke-width="2"/><path d="M2 17 H12 V23 A5 5 0 0 1 2 23 Z" fill="#c8c8c8"/><path d="M17 3 V8 A4.5 4.5 0 0 0 20 12.5 V26 A2.5 2.5 0 0 0 25 26 V12.5 A4.5 4.5 0 0 0 28 8 V3 L25 6 V9 H20 V6 Z" fill="#c8c8c8"/><circle cx="22.5" cy="25" r="1.2" fill="#1f1f1f"/></g></svg>
<svg class="s" style="left:2631.0px;top:845.0px;" width="32" height="32" viewBox="0 0 32 32"><g transform="translate(16 16) scale(1.12) translate(-15 -15)"><rect x="3" y="8" width="25" height="19" rx="1.5" fill="none" stroke="#c8c8c8" stroke-width="2.4"/><rect x="9" y="4" width="7" height="5" fill="#c8c8c8"/><path d="M7 14 H18 M7 18 H18 M7 22 H18" stroke="#c8c8c8" stroke-width="1.6"/><circle cx="23" cy="14" r="1.8" fill="#c8c8c8"/><circle cx="23" cy="21" r="1.8" fill="#c8c8c8"/></g></svg>
<svg class="s" style="left:2631.0px;top:901.0px;" width="32" height="32" viewBox="0 0 32 32"><g transform="translate(16 16) scale(1.12) translate(-15 -15)"><rect x="3" y="3" width="25" height="10" rx="2" fill="#c8c8c8"/><rect x="7" y="13" width="17" height="15" fill="#9a9a9a"/><path d="M10 25 L15 18 L20 25 Z" fill="#1f1f1f"/></g></svg>
<svg class="s" style="left:2631.0px;top:957.0px;" width="32" height="32" viewBox="0 0 32 32"><g transform="translate(16 16) scale(1.12) translate(-15 -15)"><rect x="10" y="3" width="18" height="16" fill="none" stroke="#c8c8c8" stroke-width="2.2"/><path d="M12 17 L17 9 L22 17 Z" fill="#c8c8c8"/><path d="M6 8 V23 H22 M2 12 V27 H18" fill="none" stroke="#c8c8c8" stroke-width="2"/></g></svg>
<svg class="s" style="left:2631.0px;top:1012.0px;" width="32" height="32" viewBox="0 0 32 32"><g transform="translate(16 16) scale(1.12) translate(-15 -15)"><path d="M3 24 L10 4 L15 24 Z" fill="#c8c8c8"/><circle cx="21" cy="8" r="3.5" fill="#c8c8c8"/><circle cx="20" cy="21" r="6" fill="none" stroke="#c8c8c8" stroke-width="2.2"/></g></svg>
<svg class="s" style="left:2631.0px;top:1068.0px;" width="32" height="32" viewBox="0 0 32 32"><g transform="translate(16 16) scale(1.12) translate(-15 -15)"><circle cx="15" cy="15" r="11" fill="none" stroke="#b85060" stroke-width="2.2"/><path d="M7 9 C11 8 13 12 10 15 C8 18 12 21 15 19 L17 24 C21 22 23 18 22 14 C19 14 17 11 19 6 C14 5 10 6 7 9 Z" fill="#b85060"/><path d="M3 25 L6 22 M24 6 L27 3" stroke="#b85060" stroke-width="2"/></g></svg>
<svg class="s" style="left:2631.0px;top:1141.0px;" width="32" height="32" viewBox="0 0 32 32"><g transform="translate(16 16) scale(1.12) translate(-15 -15)"><rect x="3" y="4" width="24" height="6" fill="none" stroke="#e6e6e6" stroke-width="2.2"/><rect x="5" y="10" width="20" height="16" fill="none" stroke="#e6e6e6" stroke-width="2.2"/><rect x="11" y="14" width="8" height="3" fill="#e6e6e6"/></g></svg>
<svg class="s" style="left:2631.0px;top:1214.0px;" width="32" height="32" viewBox="0 0 32 32"><g transform="translate(16 16) scale(1.12) translate(-15 -15)"><rect x="9" y="8" width="13" height="13" fill="#e6a060"/><path d="M3 9 V3 H9 M22 3 H28 V9 M28 22 V28 H22 M9 28 H3 V22" fill="none" stroke="#b08050" stroke-width="2"/></g></svg>
<svg class="s" style="left:2631.0px;top:1268.0px;" width="32" height="32" viewBox="0 0 32 32"><g transform="translate(16 16) scale(1.12) translate(-15 -15)"><path d="M4 27 L15 16 C13 10 17 4 24 5 L20 9 L22 12 L27 9 C28 15 22 20 17 18 L7 29 Z" fill="#6a8ae0"/></g></svg>
<svg class="s" style="left:2631.0px;top:1324.0px;" width="32" height="32" viewBox="0 0 32 32"><g transform="translate(16 16) scale(1.12) translate(-15 -15)"><circle cx="14" cy="16" r="5" fill="#6a8ae0"/><path d="M5 10 C0 18 6 28 16 27 M23 21 C26 15 22 7 14 6" fill="none" stroke="#6a8ae0" stroke-width="2"/><circle cx="23" cy="8" r="3" fill="#6a8ae0"/></g></svg>
<svg class="s" style="left:2631.0px;top:1375.0px;" width="32" height="32" viewBox="0 0 32 32"><g transform="translate(16 16) scale(1.12) translate(-15 -15)"><path d="M3 20 C3 12 15 4 23 6 C29 8 27 16 21 22 C15 28 5 28 3 20 Z" fill="none" stroke="#6a8ae0" stroke-width="2.5"/><circle cx="11" cy="19" r="3.5" fill="#6a8ae0"/></g></svg>
<svg class="s" style="left:2631.0px;top:1436.0px;" width="32" height="32" viewBox="0 0 32 32"><g transform="translate(16 16) scale(1.12) translate(-15 -15)"><rect x="9" y="2" width="7" height="7" fill="none" stroke="#40c0a0" stroke-width="2"/><rect x="2" y="20" width="7" height="7" fill="none" stroke="#40c0a0" stroke-width="2"/><path d="M16 6 C30 6 30 23 9 23" fill="none" stroke="#40c0a0" stroke-width="2.2"/></g></svg>
<svg class="s" style="left:2631.0px;top:1493.0px;" width="32" height="32" viewBox="0 0 32 32"><g transform="translate(16 16) scale(1.12) translate(-15 -15)"><circle cx="15" cy="15" r="12" fill="#d06070"/><path d="M15 3 V15 H27 A12 12 0 0 1 15 27 Z" fill="#282828" opacity="0.9"/><path d="M3 15 H15 V27" fill="none"/></g></svg>
<svg class="s" style="left:2692.0px;top:767.0px;" width="30" height="30" viewBox="0 0 30 30"><rect x="8" y="8" width="14" height="14" fill="#e6e6e6"/><path d="M3 9 V3 H9 M21 3 H27 V9 M27 21 V27 H21 M9 27 H3 V21" fill="none" stroke="#c8c8c8" stroke-width="2"/></svg>
<div class="t" style="left:2740.0px;top:766.2px;font-size:22.5px;line-height:31.5px;color:#e6e6e6;font-weight:normal;letter-spacing:0.5px">Spiral</div>
<svg class="s" style="left:3085.0px;top:766.0px;" width="32" height="32" viewBox="0 0 32 32"><g transform="rotate(45 16 16)"><path d="M11 3 H21 M13 3 V13 L9 18 H23 L19 13 V3 M16 18 V30" fill="none" stroke="#a8a8a8" stroke-width="2" stroke-linejoin="round"/></g></svg>
<div class="b" style="left:2689.5px;top:834.0px;width:429.5px;height:38.0px;background:#1e1e1e;border-radius:8px;"></div>
<div class="b" style="left:2689.5px;top:834.0px;width:61.2px;height:38.0px;background:#2e2e2e;border-radius:0px;border-radius:8px 0 0 8px"></div>
<svg class="s" style="left:2694.0px;top:838.0px;" width="32" height="30" viewBox="0 0 32 30"><rect x="8" y="8" width="14" height="14" fill="#e6e6e6"/><path d="M3 9 V3 H9 M21 3 H27 V9 M27 21 V27 H21 M9 27 H3 V21" fill="none" stroke="#c8c8c8" stroke-width="2"/></svg>
<svg class="s" style="left:2730.0px;top:848.0px;" width="16" height="12" viewBox="0 0 16 12"><path d="M2 3.6 L8 8.4 L14 3.6" fill="none" stroke="#d0d0d0" stroke-width="2.2" stroke-linecap="round" stroke-linejoin="round"/></svg>
<div class="t" style="left:2766.5px;top:838.2px;font-size:22.5px;line-height:31.5px;color:#e6e6e6;font-weight:normal;letter-spacing:0.5px">Spiral</div>
<div class="b" style="left:2688.0px;top:892.0px;width:432.0px;height:563.0px;background:#3d3d3d;border-radius:8px;"></div>
<svg class="s" style="left:2704.7px;top:912.4px;" width="18" height="14" viewBox="0 0 18 14"><path d="M2 4.2 L9 9.8 L16 4.2" fill="none" stroke="#c8c8c8" stroke-width="2.2" stroke-linecap="round" stroke-linejoin="round"/></svg>
<div class="t" style="left:2732.5px;top:904.0px;font-size:22px;line-height:30.8px;color:#e6e6e6;font-weight:normal;">变换</div>
<svg class="s" style="left:3085.0px;top:915.4px;" width="24" height="10" viewBox="0 0 24 10"><rect x="0" y="0" width="2.5" height="2.5" fill="#6a6a6a"/><rect x="0" y="6" width="2.5" height="2.5" fill="#6a6a6a"/><rect x="6" y="0" width="2.5" height="2.5" fill="#6a6a6a"/><rect x="6" y="6" width="2.5" height="2.5" fill="#6a6a6a"/><rect x="12" y="0" width="2.5" height="2.5" fill="#6a6a6a"/><rect x="12" y="6" width="2.5" height="2.5" fill="#6a6a6a"/><rect x="18" y="0" width="2.5" height="2.5" fill="#6a6a6a"/><rect x="18" y="6" width="2.5" height="2.5" fill="#6a6a6a"/></svg>
<div class="b" style="left:2858.8px;top:961.0px;width:164.2px;height:115.0px;background:#545454;border-radius:7px;"></div>
<div class="b" style="left:2858.8px;top:998.3px;width:164.2px;height:2.0px;background:#3d3d3d;border-radius:0px;"></div>
<div class="b" style="left:2858.8px;top:1036.7px;width:164.2px;height:2.0px;background:#3d3d3d;border-radius:0px;"></div>
<div class="b" style="left:2858.8px;top:1091.0px;width:164.2px;height:115.6px;background:#545454;border-radius:7px;"></div>
<div class="b" style="left:2858.8px;top:1128.5px;width:164.2px;height:2.0px;background:#3d3d3d;border-radius:0px;"></div>
<div class="b" style="left:2858.8px;top:1167.1px;width:164.2px;height:2.0px;background:#3d3d3d;border-radius:0px;"></div>
<div class="b" style="left:2858.8px;top:1271.0px;width:164.2px;height:115.0px;background:#545454;border-radius:7px;"></div>
<div class="b" style="left:2858.8px;top:1308.3px;width:164.2px;height:2.0px;background:#3d3d3d;border-radius:0px;"></div>
<div class="b" style="left:2858.8px;top:1346.7px;width:164.2px;height:2.0px;background:#3d3d3d;border-radius:0px;"></div>
<div class="t" style="left:1838.7px;width:1000px;text-align:right;top:963.3px;font-size:22px;line-height:30.8px;color:#d8d8d8;font-weight:normal;">位置 X</div>
<div class="t" style="left:2441.0px;width:1000px;text-align:center;top:963.3px;font-size:22px;line-height:30.8px;color:#e6e6e6;font-weight:normal;">0 m</div>
<svg class="s" style="left:3029.0px;top:966.7px;" width="28" height="24" viewBox="0 0 28 24"><path d="M5 12 V8 C5 3 13 2 14 7" fill="none" stroke="#bdbdbd" stroke-width="2"/><rect x="9" y="12" width="16" height="10" fill="none" stroke="#bdbdbd" stroke-width="2"/><rect x="15" y="15" width="3" height="4" fill="#bdbdbd"/></svg>
<div class="b" style="left:3081.0px;top:975.2px;width:7.0px;height:7.0px;background:#e6e6e6;border-radius:4px;"></div>
<div class="t" style="left:1838.7px;width:1000px;text-align:right;top:1003.6px;font-size:22px;line-height:30.8px;color:#d8d8d8;font-weight:normal;">Y</div>
<div class="t" style="left:2441.0px;width:1000px;text-align:center;top:1003.6px;font-size:22px;line-height:30.8px;color:#e6e6e6;font-weight:normal;">0 m</div>
<svg class="s" style="left:3029.0px;top:1007.0px;" width="28" height="24" viewBox="0 0 28 24"><path d="M5 12 V8 C5 3 13 2 14 7" fill="none" stroke="#bdbdbd" stroke-width="2"/><rect x="9" y="12" width="16" height="10" fill="none" stroke="#bdbdbd" stroke-width="2"/><rect x="15" y="15" width="3" height="4" fill="#bdbdbd"/></svg>
<div class="b" style="left:3081.0px;top:1015.5px;width:7.0px;height:7.0px;background:#e6e6e6;border-radius:4px;"></div>
<div class="t" style="left:1838.7px;width:1000px;text-align:right;top:1043.3px;font-size:22px;line-height:30.8px;color:#d8d8d8;font-weight:normal;">Z</div>
<div class="t" style="left:2441.0px;width:1000px;text-align:center;top:1043.3px;font-size:22px;line-height:30.8px;color:#e6e6e6;font-weight:normal;">0 m</div>
<svg class="s" style="left:3029.0px;top:1046.7px;" width="28" height="24" viewBox="0 0 28 24"><path d="M5 12 V8 C5 3 13 2 14 7" fill="none" stroke="#bdbdbd" stroke-width="2"/><rect x="9" y="12" width="16" height="10" fill="none" stroke="#bdbdbd" stroke-width="2"/><rect x="15" y="15" width="3" height="4" fill="#bdbdbd"/></svg>
<div class="b" style="left:3081.0px;top:1055.2px;width:7.0px;height:7.0px;background:#e6e6e6;border-radius:4px;"></div>
<div class="t" style="left:1838.7px;width:1000px;text-align:right;top:1093.6px;font-size:22px;line-height:30.8px;color:#d8d8d8;font-weight:normal;">旋转 X</div>
<div class="t" style="left:2441.0px;width:1000px;text-align:center;top:1093.6px;font-size:22px;line-height:30.8px;color:#e6e6e6;font-weight:normal;">0°</div>
<svg class="s" style="left:3029.0px;top:1097.0px;" width="28" height="24" viewBox="0 0 28 24"><path d="M5 12 V8 C5 3 13 2 14 7" fill="none" stroke="#bdbdbd" stroke-width="2"/><rect x="9" y="12" width="16" height="10" fill="none" stroke="#bdbdbd" stroke-width="2"/><rect x="15" y="15" width="3" height="4" fill="#bdbdbd"/></svg>
<div class="b" style="left:3081.0px;top:1105.5px;width:7.0px;height:7.0px;background:#e6e6e6;border-radius:4px;"></div>
<div class="t" style="left:1838.7px;width:1000px;text-align:right;top:1133.2px;font-size:22px;line-height:30.8px;color:#d8d8d8;font-weight:normal;">Y</div>
<div class="t" style="left:2441.0px;width:1000px;text-align:center;top:1133.2px;font-size:22px;line-height:30.8px;color:#e6e6e6;font-weight:normal;">0°</div>
<svg class="s" style="left:3029.0px;top:1136.6px;" width="28" height="24" viewBox="0 0 28 24"><path d="M5 12 V8 C5 3 13 2 14 7" fill="none" stroke="#bdbdbd" stroke-width="2"/><rect x="9" y="12" width="16" height="10" fill="none" stroke="#bdbdbd" stroke-width="2"/><rect x="15" y="15" width="3" height="4" fill="#bdbdbd"/></svg>
<div class="b" style="left:3081.0px;top:1145.1px;width:7.0px;height:7.0px;background:#e6e6e6;border-radius:4px;"></div>
<div class="t" style="left:1838.7px;width:1000px;text-align:right;top:1172.6px;font-size:22px;line-height:30.8px;color:#d8d8d8;font-weight:normal;">Z</div>
<div class="t" style="left:2441.0px;width:1000px;text-align:center;top:1172.6px;font-size:22px;line-height:30.8px;color:#e6e6e6;font-weight:normal;">0°</div>
<svg class="s" style="left:3029.0px;top:1176.0px;" width="28" height="24" viewBox="0 0 28 24"><path d="M5 12 V8 C5 3 13 2 14 7" fill="none" stroke="#bdbdbd" stroke-width="2"/><rect x="9" y="12" width="16" height="10" fill="none" stroke="#bdbdbd" stroke-width="2"/><rect x="15" y="15" width="3" height="4" fill="#bdbdbd"/></svg>
<div class="b" style="left:3081.0px;top:1184.5px;width:7.0px;height:7.0px;background:#e6e6e6;border-radius:4px;"></div>
<div class="t" style="left:1838.7px;width:1000px;text-align:right;top:1273.3px;font-size:22px;line-height:30.8px;color:#d8d8d8;font-weight:normal;">缩放 X</div>
<div class="t" style="left:2441.0px;width:1000px;text-align:center;top:1273.3px;font-size:22px;line-height:30.8px;color:#e6e6e6;font-weight:normal;">1.000</div>
<svg class="s" style="left:3029.0px;top:1276.7px;" width="28" height="24" viewBox="0 0 28 24"><path d="M5 12 V8 C5 3 13 2 14 7" fill="none" stroke="#bdbdbd" stroke-width="2"/><rect x="9" y="12" width="16" height="10" fill="none" stroke="#bdbdbd" stroke-width="2"/><rect x="15" y="15" width="3" height="4" fill="#bdbdbd"/></svg>
<div class="b" style="left:3081.0px;top:1285.2px;width:7.0px;height:7.0px;background:#e6e6e6;border-radius:4px;"></div>
<div class="t" style="left:1838.7px;width:1000px;text-align:right;top:1312.6px;font-size:22px;line-height:30.8px;color:#d8d8d8;font-weight:normal;">Y</div>
<div class="t" style="left:2441.0px;width:1000px;text-align:center;top:1312.6px;font-size:22px;line-height:30.8px;color:#e6e6e6;font-weight:normal;">1.000</div>
<svg class="s" style="left:3029.0px;top:1316.0px;" width="28" height="24" viewBox="0 0 28 24"><path d="M5 12 V8 C5 3 13 2 14 7" fill="none" stroke="#bdbdbd" stroke-width="2"/><rect x="9" y="12" width="16" height="10" fill="none" stroke="#bdbdbd" stroke-width="2"/><rect x="15" y="15" width="3" height="4" fill="#bdbdbd"/></svg>
<div class="b" style="left:3081.0px;top:1324.5px;width:7.0px;height:7.0px;background:#e6e6e6;border-radius:4px;"></div>
<div class="t" style="left:1838.7px;width:1000px;text-align:right;top:1352.6px;font-size:22px;line-height:30.8px;color:#d8d8d8;font-weight:normal;">Z</div>
<div class="t" style="left:2441.0px;width:1000px;text-align:center;top:1352.6px;font-size:22px;line-height:30.8px;color:#e6e6e6;font-weight:normal;">1.000</div>
<svg class="s" style="left:3029.0px;top:1356.0px;" width="28" height="24" viewBox="0 0 28 24"><path d="M5 12 V8 C5 3 13 2 14 7" fill="none" stroke="#bdbdbd" stroke-width="2"/><rect x="9" y="12" width="16" height="10" fill="none" stroke="#bdbdbd" stroke-width="2"/><rect x="15" y="15" width="3" height="4" fill="#bdbdbd"/></svg>
<div class="b" style="left:3081.0px;top:1364.5px;width:7.0px;height:7.0px;background:#e6e6e6;border-radius:4px;"></div>
<div class="t" style="left:1838.7px;width:1000px;text-align:right;top:1223.6px;font-size:22px;line-height:30.8px;color:#d8d8d8;font-weight:normal;">模式</div>
<div class="b" style="left:2860.0px;top:1222.0px;width:162.0px;height:34.0px;background:#1e1e1e;border-radius:7px;"></div>
<div class="t" style="left:2873.0px;top:1223.6px;font-size:22px;line-height:30.8px;color:#e6e6e6;font-weight:normal;">XYZ 欧拉</div>
<svg class="s" style="left:3002.0px;top:1234.0px;" width="16" height="12" viewBox="0 0 16 12"><path d="M2 3.6 L8 8.4 L14 3.6" fill="none" stroke="#d0d0d0" stroke-width="2.2" stroke-linecap="round" stroke-linejoin="round"/></svg>
<div class="b" style="left:3081.0px;top:1235.5px;width:7.0px;height:7.0px;background:#e6e6e6;border-radius:4px;"></div>
<svg class="s" style="left:2736.0px;top:1422.7px;" width="12" height="16" viewBox="0 0 12 16"><path d="M3.6 2 L8.4 8 L3.6 14" fill="none" stroke="#c8c8c8" stroke-width="2.2" stroke-linecap="round" stroke-linejoin="round"/></svg>
<div class="t" style="left:2761.0px;top:1415.3px;font-size:22px;line-height:30.8px;color:#e6e6e6;font-weight:normal;">增量变换</div>
<div class="b" style="left:2688.0px;top:1459.0px;width:432.0px;height:50.0px;background:#3d3d3d;border-radius:8px;"></div>
<svg class="s" style="left:2708.0px;top:1476.0px;" width="12" height="16" viewBox="0 0 12 16"><path d="M3.6 2 L8.4 8 L3.6 14" fill="none" stroke="#c8c8c8" stroke-width="2.2" stroke-linecap="round" stroke-linejoin="round"/></svg>
<div class="t" style="left:2732.5px;top:1468.6px;font-size:22px;line-height:30.8px;color:#e6e6e6;font-weight:normal;">关系</div>
<svg class="s" style="left:3085.0px;top:1480.0px;" width="24" height="10" viewBox="0 0 24 10"><rect x="0" y="0" width="2.5" height="2.5" fill="#6a6a6a"/><rect x="0" y="6" width="2.5" height="2.5" fill="#6a6a6a"/><rect x="6" y="0" width="2.5" height="2.5" fill="#6a6a6a"/><rect x="6" y="6" width="2.5" height="2.5" fill="#6a6a6a"/><rect x="12" y="0" width="2.5" height="2.5" fill="#6a6a6a"/><rect x="12" y="6" width="2.5" height="2.5" fill="#6a6a6a"/><rect x="18" y="0" width="2.5" height="2.5" fill="#6a6a6a"/><rect x="18" y="6" width="2.5" height="2.5" fill="#6a6a6a"/></svg>
<div class="b" style="left:2688.0px;top:1513.0px;width:432.0px;height:50.0px;background:#3d3d3d;border-radius:8px;"></div>
<svg class="s" style="left:2708.0px;top:1530.0px;" width="12" height="16" viewBox="0 0 12 16"><path d="M3.6 2 L8.4 8 L3.6 14" fill="none" stroke="#c8c8c8" stroke-width="2.2" stroke-linecap="round" stroke-linejoin="round"/></svg>
<div class="t" style="left:2732.5px;top:1522.6px;font-size:22px;line-height:30.8px;color:#e6e6e6;font-weight:normal;">集合</div>
<svg class="s" style="left:3085.0px;top:1534.0px;" width="24" height="10" viewBox="0 0 24 10"><rect x="0" y="0" width="2.5" height="2.5" fill="#6a6a6a"/><rect x="0" y="6" width="2.5" height="2.5" fill="#6a6a6a"/><rect x="6" y="0" width="2.5" height="2.5" fill="#6a6a6a"/><rect x="6" y="6" width="2.5" height="2.5" fill="#6a6a6a"/><rect x="12" y="0" width="2.5" height="2.5" fill="#6a6a6a"/><rect x="12" y="6" width="2.5" height="2.5" fill="#6a6a6a"/><rect x="18" y="0" width="2.5" height="2.5" fill="#6a6a6a"/><rect x="18" y="6" width="2.5" height="2.5" fill="#6a6a6a"/></svg>
<div class="b" style="left:2688.0px;top:1568.0px;width:432.0px;height:50.0px;background:#3d3d3d;border-radius:8px;"></div>
<svg class="s" style="left:2708.0px;top:1585.0px;" width="12" height="16" viewBox="0 0 12 16"><path d="M3.6 2 L8.4 8 L3.6 14" fill="none" stroke="#c8c8c8" stroke-width="2.2" stroke-linecap="round" stroke-linejoin="round"/></svg>
<div class="t" style="left:2732.5px;top:1577.6px;font-size:22px;line-height:30.8px;color:#e6e6e6;font-weight:normal;">运动路径</div>
<svg class="s" style="left:3085.0px;top:1589.0px;" width="24" height="10" viewBox="0 0 24 10"><rect x="0" y="0" width="2.5" height="2.5" fill="#6a6a6a"/><rect x="0" y="6" width="2.5" height="2.5" fill="#6a6a6a"/><rect x="6" y="0" width="2.5" height="2.5" fill="#6a6a6a"/><rect x="6" y="6" width="2.5" height="2.5" fill="#6a6a6a"/><rect x="12" y="0" width="2.5" height="2.5" fill="#6a6a6a"/><rect x="12" y="6" width="2.5" height="2.5" fill="#6a6a6a"/><rect x="18" y="0" width="2.5" height="2.5" fill="#6a6a6a"/><rect x="18" y="6" width="2.5" height="2.5" fill="#6a6a6a"/></svg>
<div class="b" style="left:2688.0px;top:1621.6px;width:432.0px;height:50.0px;background:#3d3d3d;border-radius:8px;"></div>
<svg class="s" style="left:2708.0px;top:1638.6px;" width="12" height="16" viewBox="0 0 12 16"><path d="M3.6 2 L8.4 8 L3.6 14" fill="none" stroke="#c8c8c8" stroke-width="2.2" stroke-linecap="round" stroke-linejoin="round"/></svg>
<div class="t" style="left:2732.5px;top:1631.2px;font-size:22px;line-height:30.8px;color:#e6e6e6;font-weight:normal;">着色方式</div>
<svg class="s" style="left:3085.0px;top:1642.6px;" width="24" height="10" viewBox="0 0 24 10"><rect x="0" y="0" width="2.5" height="2.5" fill="#6a6a6a"/><rect x="0" y="6" width="2.5" height="2.5" fill="#6a6a6a"/><rect x="6" y="0" width="2.5" height="2.5" fill="#6a6a6a"/><rect x="6" y="6" width="2.5" height="2.5" fill="#6a6a6a"/><rect x="12" y="0" width="2.5" height="2.5" fill="#6a6a6a"/><rect x="12" y="6" width="2.5" height="2.5" fill="#6a6a6a"/><rect x="18" y="0" width="2.5" height="2.5" fill="#6a6a6a"/><rect x="18" y="6" width="2.5" height="2.5" fill="#6a6a6a"/></svg>
<div class="b" style="left:2688.0px;top:1675.0px;width:432.0px;height:50.0px;background:#3d3d3d;border-radius:8px;"></div>
<svg class="s" style="left:2708.0px;top:1692.0px;" width="12" height="16" viewBox="0 0 12 16"><path d="M3.6 2 L8.4 8 L3.6 14" fill="none" stroke="#c8c8c8" stroke-width="2.2" stroke-linecap="round" stroke-linejoin="round"/></svg>
<div class="t" style="left:2732.5px;top:1684.6px;font-size:22px;line-height:30.8px;color:#e6e6e6;font-weight:normal;">可见性</div>
<svg class="s" style="left:3085.0px;top:1696.0px;" width="24" height="10" viewBox="0 0 24 10"><rect x="0" y="0" width="2.5" height="2.5" fill="#6a6a6a"/><rect x="0" y="6" width="2.5" height="2.5" fill="#6a6a6a"/><rect x="6" y="0" width="2.5" height="2.5" fill="#6a6a6a"/><rect x="6" y="6" width="2.5" height="2.5" fill="#6a6a6a"/><rect x="12" y="0" width="2.5" height="2.5" fill="#6a6a6a"/><rect x="12" y="6" width="2.5" height="2.5" fill="#6a6a6a"/><rect x="18" y="0" width="2.5" height="2.5" fill="#6a6a6a"/><rect x="18" y="6" width="2.5" height="2.5" fill="#6a6a6a"/></svg>
<div class="b" style="left:2688.0px;top:1728.0px;width:432.0px;height:50.0px;background:#3d3d3d;border-radius:8px;"></div>
<svg class="s" style="left:2708.0px;top:1745.0px;" width="12" height="16" viewBox="0 0 12 16"><path d="M3.6 2 L8.4 8 L3.6 14" fill="none" stroke="#c8c8c8" stroke-width="2.2" stroke-linecap="round" stroke-linejoin="round"/></svg>
<div class="t" style="left:2732.5px;top:1737.6px;font-size:22px;line-height:30.8px;color:#e6e6e6;font-weight:normal;">视图显示</div>
<svg class="s" style="left:3085.0px;top:1749.0px;" width="24" height="10" viewBox="0 0 24 10"><rect x="0" y="0" width="2.5" height="2.5" fill="#6a6a6a"/><rect x="0" y="6" width="2.5" height="2.5" fill="#6a6a6a"/><rect x="6" y="0" width="2.5" height="2.5" fill="#6a6a6a"/><rect x="6" y="6" width="2.5" height="2.5" fill="#6a6a6a"/><rect x="12" y="0" width="2.5" height="2.5" fill="#6a6a6a"/><rect x="12" y="6" width="2.5" height="2.5" fill="#6a6a6a"/><rect x="18" y="0" width="2.5" height="2.5" fill="#6a6a6a"/><rect x="18" y="6" width="2.5" height="2.5" fill="#6a6a6a"/></svg>
<div class="b" style="left:3124.0px;top:900.0px;width:4.0px;height:660.0px;background:#3a3a3a;border-radius:2px;"></div>
<div class="b" style="left:111.0px;top:1753.0px;width:3025.0px;height:49.0px;background:#1b1b1b;border-radius:0px;border-radius:0 0 22px 22px"></div>
<div class="b" style="left:132px;top:1764px;width:60px;height:28px;border:2px solid #8a8a8a;border-radius:7px"></div>
<div class="t" style="left:138.5px;top:1762.5px;font-size:25px;line-height:35.0px;color:#b8b8b8;font-weight:normal;-webkit-text-stroke:0;">空格</div>
<div class="t" style="left:206.0px;top:1764.8px;font-size:21px;line-height:29.4px;color:#b4b4b4;font-weight:normal;">搜索</div>
<div class="t" style="left:2111.0px;width:1000px;text-align:right;top:1764.8px;font-size:21px;line-height:29.4px;color:#8a8a8a;font-weight:normal;">4.4.3</div>
<div class="b" style="left:612px;top:230px;width:317px;height:1405px;background:#181818;border-radius:0 7px 8px 8px;box-shadow:0 4px 14px rgba(0,0,0,0.35)"></div>
<div class="t" style="left:677.0px;top:243.1px;font-size:22px;line-height:30.8px;color:#e6e6e6;font-weight:normal;">变换</div>
<svg class="s" style="left:906.0px;top:251.0px;" width="12" height="12" viewBox="0 0 12 12"><path d="M1 1 L11 6.0 L1 11 Z" fill="#c8c8c8"/></svg>
<div class="t" style="left:677.0px;top:283.1px;font-size:22px;line-height:30.8px;color:#e6e6e6;font-weight:normal;">设置原点</div>
<svg class="s" style="left:906.0px;top:291.0px;" width="12" height="12" viewBox="0 0 12 12"><path d="M1 1 L11 6.0 L1 11 Z" fill="#c8c8c8"/></svg>
<div class="t" style="left:677.0px;top:323.1px;font-size:22px;line-height:30.8px;color:#e6e6e6;font-weight:normal;">镜像</div>
<svg class="s" style="left:906.0px;top:331.0px;" width="12" height="12" viewBox="0 0 12 12"><path d="M1 1 L11 6.0 L1 11 Z" fill="#c8c8c8"/></svg>
<div class="t" style="left:677.0px;top:363.1px;font-size:22px;line-height:30.8px;color:#e6e6e6;font-weight:normal;">清空</div>
<svg class="s" style="left:906.0px;top:371.0px;" width="12" height="12" viewBox="0 0 12 12"><path d="M1 1 L11 6.0 L1 11 Z" fill="#c8c8c8"/></svg>
<div class="b" style="left:618.5px;top:399.0px;width:303.5px;height:36.0px;background:#414141;border-radius:6px;"></div>
<div class="t" style="left:677.0px;top:403.1px;font-size:22px;line-height:30.8px;color:#e6e6e6;font-weight:normal;">应用</div>
<div class="t" style="left:-98.0px;width:1000px;text-align:right;top:404.1px;font-size:20.5px;line-height:28.7px;color:#8c8c8c;font-weight:normal;">⌘ A</div>
<svg class="s" style="left:906.0px;top:411.0px;" width="12" height="12" viewBox="0 0 12 12"><path d="M1 1 L11 6.0 L1 11 Z" fill="#c8c8c8"/></svg>
<div class="t" style="left:677.0px;top:443.1px;font-size:22px;line-height:30.8px;color:#e6e6e6;font-weight:normal;">吸附</div>
<svg class="s" style="left:906.0px;top:451.0px;" width="12" height="12" viewBox="0 0 12 12"><path d="M1 1 L11 6.0 L1 11 Z" fill="#c8c8c8"/></svg>
<div class="b" style="left:626.0px;top:483.0px;width:288.0px;height:2.0px;background:#262626;border-radius:0px;"></div>
<div class="t" style="left:677.0px;top:497.1px;font-size:22px;line-height:30.8px;color:#e6e6e6;font-weight:normal;">复制物体</div>
<div class="t" style="left:-98.0px;width:1000px;text-align:right;top:498.1px;font-size:20.5px;line-height:28.7px;color:#8c8c8c;font-weight:normal;">⇧ D</div>
<div class="t" style="left:677.0px;top:537.1px;font-size:22px;line-height:30.8px;color:#e6e6e6;font-weight:normal;">关联复制</div>
<div class="t" style="left:-98.0px;width:1000px;text-align:right;top:538.1px;font-size:20.5px;line-height:28.7px;color:#8c8c8c;font-weight:normal;">⌥ D</div>
<div class="t" style="left:677.0px;top:577.1px;font-size:22px;line-height:30.8px;color:#e6e6e6;font-weight:normal;">合并</div>
<div class="t" style="left:-98.0px;width:1000px;text-align:right;top:578.1px;font-size:20.5px;line-height:28.7px;color:#8c8c8c;font-weight:normal;">⌘ J</div>
<div class="b" style="left:626.0px;top:617.0px;width:288.0px;height:2.0px;background:#262626;border-radius:0px;"></div>
<div class="t" style="left:677.0px;top:631.1px;font-size:22px;line-height:30.8px;color:#e6e6e6;font-weight:normal;">复制物体</div>
<div class="t" style="left:-98.0px;width:1000px;text-align:right;top:632.1px;font-size:20.5px;line-height:28.7px;color:#8c8c8c;font-weight:normal;">⌘ C</div>
<svg class="s" style="left:632.0px;top:629.0px;" width="32" height="32" viewBox="0 0 32 32"><path d="M14 5 H26 V22 H14 Z M17 3 H23" fill="#c0c0c0"/><path d="M3 29 L13 19 M6 19 H13 V26" fill="none" stroke="#d0d0d0" stroke-width="2.2"/></svg>
<div class="t" style="left:677.0px;top:671.1px;font-size:22px;line-height:30.8px;color:#e6e6e6;font-weight:normal;">粘贴物体</div>
<div class="t" style="left:-98.0px;width:1000px;text-align:right;top:672.1px;font-size:20.5px;line-height:28.7px;color:#8c8c8c;font-weight:normal;">⌘ V</div>
<svg class="s" style="left:632.0px;top:669.0px;" width="32" height="32" viewBox="0 0 32 32"><path d="M4 5 H18 V24 H4 Z M8 3 H14" fill="#c0c0c0"/><path d="M14 15 L26 27 M19 27 H26 V20" fill="none" stroke="#d0d0d0" stroke-width="2.2"/></svg>
<div class="b" style="left:626.0px;top:711.0px;width:288.0px;height:2.0px;background:#262626;border-radius:0px;"></div>
<div class="t" style="left:677.0px;top:725.1px;font-size:22px;line-height:30.8px;color:#e6e6e6;font-weight:normal;">资产</div>
<svg class="s" style="left:906.0px;top:733.0px;" width="12" height="12" viewBox="0 0 12 12"><path d="M1 1 L11 6.0 L1 11 Z" fill="#c8c8c8"/></svg>
<svg class="s" style="left:632.0px;top:723.0px;" width="32" height="32" viewBox="0 0 32 32"><path d="M3 29 L12 12 L15 14 L8 29 Z" fill="#d0d0d0"/><rect x="15" y="8" width="5" height="21" fill="#d0d0d0"/><rect x="23" y="4" width="5" height="25" fill="#d0d0d0"/></svg>
<div class="t" style="left:677.0px;top:765.1px;font-size:22px;line-height:30.8px;color:#e6e6e6;font-weight:normal;">集合</div>
<svg class="s" style="left:906.0px;top:773.0px;" width="12" height="12" viewBox="0 0 12 12"><path d="M1 1 L11 6.0 L1 11 Z" fill="#c8c8c8"/></svg>
<div class="b" style="left:626.0px;top:805.0px;width:288.0px;height:2.0px;background:#262626;border-radius:0px;"></div>
<div class="t" style="left:677.0px;top:819.1px;font-size:22px;line-height:30.8px;color:#e6e6e6;font-weight:normal;">库重写</div>
<svg class="s" style="left:906.0px;top:827.0px;" width="12" height="12" viewBox="0 0 12 12"><path d="M1 1 L11 6.0 L1 11 Z" fill="#c8c8c8"/></svg>
<svg class="s" style="left:632.0px;top:817.0px;" width="32" height="32" viewBox="0 0 32 32"><circle cx="10" cy="19" r="6" fill="none" stroke="#b8b8b8" stroke-width="2.2"/><circle cx="21" cy="11" r="6" fill="none" stroke="#b8b8b8" stroke-width="2.2"/><path d="M4 4 L28 28" stroke="#b8b8b8" stroke-width="2.2"/></svg>
<div class="t" style="left:677.0px;top:859.1px;font-size:22px;line-height:30.8px;color:#e6e6e6;font-weight:normal;">关系</div>
<svg class="s" style="left:906.0px;top:867.0px;" width="12" height="12" viewBox="0 0 12 12"><path d="M1 1 L11 6.0 L1 11 Z" fill="#c8c8c8"/></svg>
<div class="t" style="left:677.0px;top:899.1px;font-size:22px;line-height:30.8px;color:#e6e6e6;font-weight:normal;">父级</div>
<svg class="s" style="left:906.0px;top:907.0px;" width="12" height="12" viewBox="0 0 12 12"><path d="M1 1 L11 6.0 L1 11 Z" fill="#c8c8c8"/></svg>
<div class="t" style="left:677.0px;top:939.1px;font-size:22px;line-height:30.8px;color:#e6e6e6;font-weight:normal;">修改器</div>
<svg class="s" style="left:906.0px;top:947.0px;" width="12" height="12" viewBox="0 0 12 12"><path d="M1 1 L11 6.0 L1 11 Z" fill="#c8c8c8"/></svg>
<svg class="s" style="left:632.0px;top:937.0px;" width="32" height="32" viewBox="0 0 32 32"><path d="M5 27 L17 15 C15 9 19 4 25 5 L21 9 L23 12 L27 9 C28 15 23 19 18 17 L7 29 Z" fill="#e0e0e0"/></svg>
<div class="t" style="left:677.0px;top:978.1px;font-size:22px;line-height:30.8px;color:#e6e6e6;font-weight:normal;">约束</div>
<svg class="s" style="left:906.0px;top:986.0px;" width="12" height="12" viewBox="0 0 12 12"><path d="M1 1 L11 6.0 L1 11 Z" fill="#c8c8c8"/></svg>
<svg class="s" style="left:632.0px;top:976.0px;" width="32" height="32" viewBox="0 0 32 32"><path d="M4 20 C4 12 16 4 24 6 C30 8 28 16 22 22 C16 28 6 28 4 20 Z" fill="none" stroke="#e0e0e0" stroke-width="2.5"/><circle cx="12" cy="20" r="4" fill="#e0e0e0"/><circle cx="23" cy="10" r="2" fill="#e0e0e0"/></svg>
<div class="t" style="left:677.0px;top:1018.7px;font-size:22px;line-height:30.8px;color:#e6e6e6;font-weight:normal;">追踪</div>
<svg class="s" style="left:906.0px;top:1026.6px;" width="12" height="12" viewBox="0 0 12 12"><path d="M1 1 L11 6.0 L1 11 Z" fill="#c8c8c8"/></svg>
<div class="t" style="left:677.0px;top:1059.8px;font-size:22px;line-height:30.8px;color:#e6e6e6;font-weight:normal;">关联/传递数据</div>
<div class="t" style="left:-98.0px;width:1000px;text-align:right;top:1060.9px;font-size:20.5px;line-height:28.7px;color:#8c8c8c;font-weight:normal;">⌘ L</div>
<svg class="s" style="left:906.0px;top:1067.7px;" width="12" height="12" viewBox="0 0 12 12"><path d="M1 1 L11 6.0 L1 11 Z" fill="#c8c8c8"/></svg>
<div class="b" style="left:626.0px;top:1097.0px;width:288.0px;height:2.0px;background:#262626;border-radius:0px;"></div>
<div class="t" style="left:677.0px;top:1113.1px;font-size:22px;line-height:30.8px;color:#e6e6e6;font-weight:normal;">平滑着色</div>
<div class="t" style="left:677.0px;top:1152.9px;font-size:22px;line-height:30.8px;color:#e6e6e6;font-weight:normal;">平直着色</div>
<div class="b" style="left:626.0px;top:1193.5px;width:288.0px;height:2.0px;background:#262626;border-radius:0px;"></div>
<div class="t" style="left:677.0px;top:1206.1px;font-size:22px;line-height:30.8px;color:#e6e6e6;font-weight:normal;">动画</div>
<svg class="s" style="left:906.0px;top:1214.0px;" width="12" height="12" viewBox="0 0 12 12"><path d="M1 1 L11 6.0 L1 11 Z" fill="#c8c8c8"/></svg>
<div class="t" style="left:677.0px;top:1246.7px;font-size:22px;line-height:30.8px;color:#e6e6e6;font-weight:normal;">刚体</div>
<svg class="s" style="left:906.0px;top:1254.6px;" width="12" height="12" viewBox="0 0 12 12"><path d="M1 1 L11 6.0 L1 11 Z" fill="#c8c8c8"/></svg>
<div class="b" style="left:626.0px;top:1286.6px;width:288.0px;height:2.0px;background:#262626;border-radius:0px;"></div>
<div class="t" style="left:677.0px;top:1300.7px;font-size:22px;line-height:30.8px;color:#e6e6e6;font-weight:normal;">快速效果</div>
<svg class="s" style="left:906.0px;top:1308.6px;" width="12" height="12" viewBox="0 0 12 12"><path d="M1 1 L11 6.0 L1 11 Z" fill="#c8c8c8"/></svg>
<div class="b" style="left:626.0px;top:1341.0px;width:288.0px;height:2.0px;background:#262626;border-radius:0px;"></div>
<div class="t" style="left:677.0px;top:1355.1px;font-size:22px;line-height:30.8px;color:#e6e6e6;font-weight:normal;">转换</div>
<svg class="s" style="left:906.0px;top:1363.0px;" width="12" height="12" viewBox="0 0 12 12"><path d="M1 1 L11 6.0 L1 11 Z" fill="#c8c8c8"/></svg>
<div class="b" style="left:626.0px;top:1395.8px;width:288.0px;height:2.0px;background:#262626;border-radius:0px;"></div>
<div class="t" style="left:677.0px;top:1408.6px;font-size:22px;line-height:30.8px;color:#e6e6e6;font-weight:normal;">显示 / 隐藏</div>
<svg class="s" style="left:906.0px;top:1416.5px;" width="12" height="12" viewBox="0 0 12 12"><path d="M1 1 L11 6.0 L1 11 Z" fill="#c8c8c8"/></svg>
<div class="t" style="left:677.0px;top:1449.1px;font-size:22px;line-height:30.8px;color:#e6e6e6;font-weight:normal;">清理</div>
<svg class="s" style="left:906.0px;top:1457.0px;" width="12" height="12" viewBox="0 0 12 12"><path d="M1 1 L11 6.0 L1 11 Z" fill="#c8c8c8"/></svg>
<div class="b" style="left:626.0px;top:1489.0px;width:288.0px;height:2.0px;background:#262626;border-radius:0px;"></div>
<div class="t" style="left:677.0px;top:1503.1px;font-size:22px;line-height:30.8px;color:#e6e6e6;font-weight:normal;">删除</div>
<div class="t" style="left:-98.0px;width:1000px;text-align:right;top:1504.2px;font-size:20.5px;line-height:28.7px;color:#8c8c8c;font-weight:normal;">X</div>
<div class="t" style="left:677.0px;top:1543.1px;font-size:22px;line-height:30.8px;color:#e6e6e6;font-weight:normal;">全局删除</div>
<div class="t" style="left:-98.0px;width:1000px;text-align:right;top:1544.2px;font-size:20.5px;line-height:28.7px;color:#8c8c8c;font-weight:normal;">⇧ X</div>
<div class="b" style="left:626.0px;top:1582.0px;width:288.0px;height:2.0px;background:#262626;border-radius:0px;"></div>
<div class="t" style="left:677.0px;top:1596.8px;font-size:22px;line-height:30.8px;color:#e6e6e6;font-weight:normal;">布尔</div>
<svg class="s" style="left:906.0px;top:1604.7px;" width="12" height="12" viewBox="0 0 12 12"><path d="M1 1 L11 6.0 L1 11 Z" fill="#c8c8c8"/></svg>
<div class="b" style="left:933px;top:389px;width:315px;height:601.5px;background:#181818;border-radius:8px;box-shadow:0 4px 14px rgba(0,0,0,0.35)"></div>
<div class="t" style="left:994.0px;top:402.1px;font-size:22px;line-height:30.8px;color:#e6e6e6;font-weight:normal;">位置</div>
<div class="t" style="left:994.0px;top:442.1px;font-size:22px;line-height:30.8px;color:#e6e6e6;font-weight:normal;">旋转</div>
<div class="t" style="left:994.0px;top:482.1px;font-size:22px;line-height:30.8px;color:#e6e6e6;font-weight:normal;">缩放</div>
<div class="t" style="left:994.0px;top:522.1px;font-size:22px;line-height:30.8px;color:#e6e6e6;font-weight:normal;">全部变换</div>
<div class="t" style="left:994.0px;top:562.1px;font-size:22px;line-height:30.8px;color:#e6e6e6;font-weight:normal;">旋转 + 缩放</div>
<div class="b" style="left:945.0px;top:601.6px;width:287.0px;height:2.0px;background:#262626;border-radius:0px;"></div>
<div class="t" style="left:994.0px;top:616.1px;font-size:22px;line-height:30.8px;color:#e6e6e6;font-weight:normal;">位置 <span style="letter-spacing:4px;margin-left:1.5px">-&gt;</span> 增量</div>
<div class="t" style="left:994.0px;top:656.1px;font-size:22px;line-height:30.8px;color:#e6e6e6;font-weight:normal;">旋转 <span style="letter-spacing:4px;margin-left:1.5px">-&gt;</span> 增量</div>
<div class="t" style="left:994.0px;top:696.1px;font-size:22px;line-height:30.8px;color:#e6e6e6;font-weight:normal;">缩放 <span style="letter-spacing:4px;margin-left:1.5px">-&gt;</span> 增量</div>
<div class="t" style="left:994.0px;top:736.1px;font-size:22px;line-height:30.8px;color:#e6e6e6;font-weight:normal;">全部变换 <span style="letter-spacing:4px;margin-left:1.5px">-&gt;</span> 增量</div>
<div class="t" style="left:994.0px;top:776.1px;font-size:22px;line-height:30.8px;color:#e6e6e6;font-weight:normal;">动画变换 <span style="letter-spacing:4px;margin-left:1.5px">-&gt;</span> 增量</div>
<div class="b" style="left:945.0px;top:816.0px;width:287.0px;height:2.0px;background:#262626;border-radius:0px;"></div>
<div class="t" style="left:994.0px;top:830.1px;font-size:22px;line-height:30.8px;color:#e6e6e6;font-weight:normal;">可视变换</div>
<div class="b" style="left:936.0px;top:867.0px;width:304.0px;height:35.0px;background:#414141;border-radius:6px;"></div>
<div class="t" style="left:994.0px;top:870.1px;font-size:22px;line-height:30.8px;color:#e6e6e6;font-weight:normal;">可视几何 <span style="letter-spacing:4px;margin-left:1.5px">-&gt;</span> 网格</div>
<div class="t" style="left:994.0px;top:909.1px;font-size:22px;line-height:30.8px;color:#e6e6e6;font-weight:normal;">实例独立化(实现实例)</div>
<div class="t" style="left:994.0px;top:950.1px;font-size:22px;line-height:30.8px;color:#e6e6e6;font-weight:normal;">父级反校正</div>
<div class="b" style="left:1142.5px;top:920.5px;width:450px;height:86px;background:#191919;border-radius:8px;box-shadow:0 0 0 1px #2a2a2a, 0 4px 12px rgba(0,0,0,0.4)"></div>
<div class="t" style="left:1168.8px;top:936.6px;font-size:22px;line-height:30.8px;color:#e6e6e6;font-weight:normal;">将所选物体转换为其他类型: <span style="color:#7d9dd8">网格</span></div>
<div class="t" style="left:1168.8px;top:964.6px;font-size:22px;line-height:30.8px;color:#d0d0d0;font-weight:normal;">曲线、曲面、融球、文本物体转换为网格</div>
</body></html>
